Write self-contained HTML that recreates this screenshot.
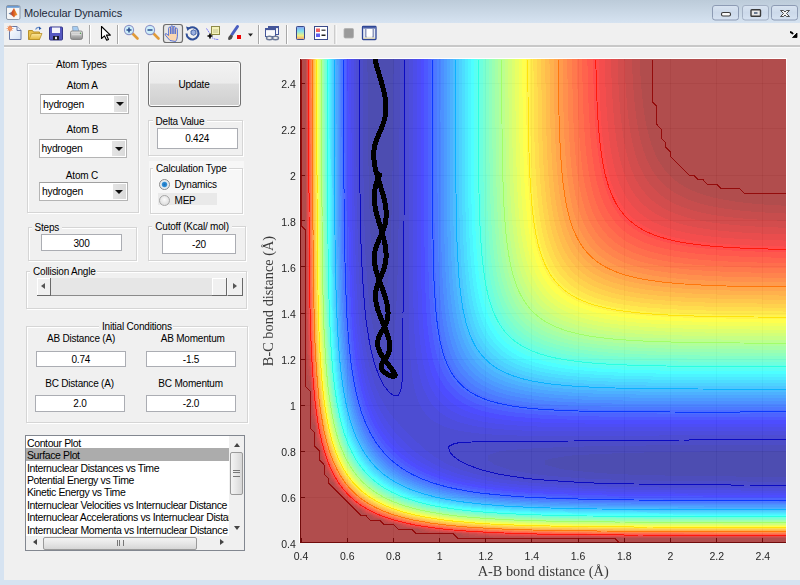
<!DOCTYPE html>
<html><head><meta charset="utf-8">
<style>
html,body{margin:0;padding:0;}
body{width:800px;height:585px;overflow:hidden;position:relative;background:#d6e3f1;font-family:"Liberation Sans",sans-serif;font-size:11px;color:#000;}
.abs{position:absolute;}
#title{left:0;top:0;width:800px;height:23px;background:linear-gradient(#bccbd9,#d6e3f1);}
#ttext{left:24px;top:7px;font-size:11px;line-height:12px;color:#1e2a3a;letter-spacing:-0.05px;}
#client{left:4px;top:23px;width:796px;height:557px;background:#f0f0f0;}
#toolbar{left:4px;top:23px;width:796px;height:22px;background:#f0f0f0;}
#tbline{left:4px;top:45px;width:796px;height:2px;background:#c8c8c8;border-bottom:1px solid #fafafa;}
.wbtn{top:5px;height:14px;border:1px solid #8b9ab0;border-radius:3px;background:linear-gradient(#d3dfed,#c7d5e6);box-shadow:inset 0 0 0 1px #e6eef7;}
.panel{position:absolute;border:1px solid #d0d0d0;box-shadow:1px 1px 0 #fff inset,1px 1px 0 #fff;}
.ptitle{position:absolute;background:#f0f0f0;padding:0 2px;white-space:nowrap;line-height:12px;}
.lbl{position:absolute;white-space:nowrap;line-height:12px;}
.edit{position:absolute;background:#fff;border:1px solid #a5acb5;box-sizing:border-box;text-align:center;line-height:15px;}
.popup{position:absolute;background:#fff;border:1px solid #a9a9a9;box-sizing:border-box;}
.popup .t{position:absolute;left:3px;top:3px;font-size:11px;}
.popup .b{position:absolute;right:0;top:0;bottom:0;width:14px;background:linear-gradient(#f2f2f2,#dcdcdc);}
.popup .b:after{content:"";position:absolute;left:3px;top:7px;border-left:4px solid transparent;border-right:4px solid transparent;border-top:4px solid #000;}
.tick{font-size:10.5px;color:#262626;position:absolute;white-space:nowrap;line-height:11px;}
.sep{position:absolute;top:26px;width:1px;height:18px;background:#a0a0a0;border-right:1px solid #fff;}
.li{position:absolute;left:2px;height:12.5px;line-height:12.5px;white-space:nowrap;}
</style></head><body>
<div id="title" class="abs"></div>
<svg class="abs" style="left:0;top:0" width="800" height="23" viewBox="0 0 800 23">
<defs><linearGradient id="gbtn" x1="0" y1="0" x2="0" y2="1"><stop offset="0" stop-color="#d9e4f1"/><stop offset="0.5" stop-color="#ccd9ea"/><stop offset="1" stop-color="#d7e3f2"/></linearGradient>
<linearGradient id="gml" x1="0" y1="0" x2="1" y2="0"><stop offset="0" stop-color="#3a8ad0"/><stop offset="0.45" stop-color="#d04a20"/><stop offset="1" stop-color="#f0a030"/></linearGradient></defs>
<rect x="6.5" y="5.5" width="13.5" height="14" rx="1.5" fill="#f6f6f6" stroke="#8a97a8"/>
<rect x="7" y="6" width="12.5" height="1.8" fill="#6a9ad0"/>
<path d="M8.5 13.5l3-1.5 2.5-4 3.5 7-2 0.5-1.5 2-2-2z" fill="url(#gml)"/>
<rect x="712.5" y="5.5" width="26" height="14.5" rx="2.5" fill="url(#gbtn)" stroke="#8d9bb4"/>
<rect x="721.5" y="12.5" width="9" height="3.5" rx="1.5" fill="#fafafa" stroke="#3a3a3a" stroke-width="1.1"/>
<rect x="742.5" y="5.5" width="26" height="14.5" rx="2.5" fill="url(#gbtn)" stroke="#a3b0c4"/>
<rect x="751" y="9.8" width="9.5" height="6.5" rx="0.8" fill="#e8e8e8" stroke="#3a3a3a" stroke-width="1.4"/>
<rect x="754" y="12" width="3.5" height="2" fill="#6a7a90"/>
<rect x="771.5" y="5.5" width="26" height="14.5" rx="2.5" fill="url(#gbtn)" stroke="#8d9bb4"/>
<path d="M780.5 10.5h3l1.5 1.5 1.5-1.5h3l-3 3 3 3h-3l-1.5-1.5-1.5 1.5h-3l3-3z" fill="#f4f4f4" stroke="#3a3a3a" stroke-width="0.9" stroke-linejoin="round"/>
</svg>
<div id="ttext" class="abs">Molecular Dynamics</div>
<div id="client" class="abs"></div>
<div id="tbline" class="abs"></div>
<svg class="abs" style="left:0;top:0" width="800" height="48" viewBox="0 0 800 48">
<defs>
<linearGradient id="gpage" x1="0" y1="0" x2="1" y2="1"><stop offset="0" stop-color="#ffffff"/><stop offset="1" stop-color="#d5e2f5"/></linearGradient>
<linearGradient id="gfold" x1="0" y1="0" x2="0" y2="1"><stop offset="0" stop-color="#fbe7a0"/><stop offset="1" stop-color="#e4b83c"/></linearGradient>
<linearGradient id="gcb" x1="0" y1="0" x2="0" y2="1"><stop offset="0" stop-color="#8aa0f0"/><stop offset="0.35" stop-color="#7fe0f0"/><stop offset="0.7" stop-color="#f0f080"/><stop offset="1" stop-color="#f4a070"/></linearGradient>
<linearGradient id="gprn" x1="0" y1="0" x2="0" y2="1"><stop offset="0" stop-color="#e8e8e8"/><stop offset="1" stop-color="#8a8a8a"/></linearGradient>
</defs>
<!-- new -->
<path d="M9.5 26.5h7.5l4 4v9h-11.5z" fill="url(#gpage)" stroke="#6678a8"/>
<path d="M17 26.5v4h4" fill="#e8eef8" stroke="#6678a8"/>
<circle cx="10" cy="28.5" r="2.2" fill="#f07a30"/>
<path d="M6.5 28.5h7M10 25v7M7.5 26l5 5M12.5 26l-5 5" stroke="#f39a70" stroke-width="0.8"/>
<!-- open -->
<path d="M28.5 30.5h4l1 1.5h6v7.5h-11z" fill="#e9c04a" stroke="#b8902a"/>
<path d="M29 39.5l2.5-6h10.5l-2.5 6z" fill="url(#gfold)" stroke="#b8902a" stroke-width="0.8"/>
<path d="M35.5 29.5q2-3 4.5-1.5" fill="none" stroke="#6a8ec8" stroke-width="1.2"/>
<path d="M39 26.5l2.5 2-2.5 1.5z" fill="#2c5aa8"/>
<!-- save -->
<rect x="49.5" y="27" width="13" height="13" rx="1" fill="#5558c0" stroke="#34378a"/>
<rect x="52" y="27.5" width="8" height="5.5" fill="#f4f4fa"/>
<rect x="53" y="36" width="6" height="4" fill="#1a1a2a"/><rect x="55" y="36.8" width="2" height="2.4" fill="#e8e8e8"/>
<!-- print -->
<path d="M72.5 26.5h5l1.5 5h-6z" fill="#a6ccf2" stroke="#8aa0b8" stroke-width="0.8"/>
<path d="M70.5 32.5q0-1.5 1.5-1.5h9q1.5 0 1.5 1.5v5q0 2-2 2h-8q-2 0-2-2z" fill="url(#gprn)" stroke="#7a7a7a" stroke-width="0.8"/>
<rect x="72" y="34" width="9" height="1.2" fill="#d8d8d8"/>
<circle cx="80.5" cy="33.2" r="0.7" fill="#4a9a4a"/>
<!-- sep -->
<rect x="89" y="25" width="1" height="19" fill="#a8a8a8"/><rect x="90" y="25" width="1" height="19" fill="#fff"/>
<!-- arrow -->
<path d="M101.5 26.5v12l3-2.6 2.2 4.4 1.8-0.9-2.1-4.3h4z" fill="#fff" stroke="#000" stroke-width="1.1" stroke-linejoin="round"/>
<rect x="117" y="25" width="1" height="19" fill="#a8a8a8"/><rect x="118" y="25" width="1" height="19" fill="#fff"/>
<!-- zoom in -->
<line x1="132.5" y1="33.5" x2="137.5" y2="38.5" stroke="#e09a38" stroke-width="2.6" stroke-linecap="round"/>
<circle cx="129" cy="30" r="4.6" fill="#cdeefa" stroke="#8c94c8" stroke-width="1.1"/>
<path d="M126.5 30h5M129 27.5v5" stroke="#2a4a8a" stroke-width="1.5"/>
<!-- zoom out -->
<line x1="153.5" y1="33.5" x2="158.5" y2="38.5" stroke="#e09a38" stroke-width="2.6" stroke-linecap="round"/>
<circle cx="150" cy="30" r="4.6" fill="#cdeefa" stroke="#8c94c8" stroke-width="1.1"/>
<path d="M147.5 30h5" stroke="#2a4a8a" stroke-width="1.5"/>
<!-- pan pressed -->
<rect x="163.5" y="24.5" width="19" height="18" rx="2.5" fill="#e6e6e6" stroke="#6e6e6e" stroke-width="1.2"/>
<g fill="#fbd6b0" stroke="#4468d8" stroke-width="0.9">
<path d="M170 40.5l-4.6-5.2q-1-1.4 0.6-1.8l2.6 2v-7q0-1.3 1.1-1.3t1.1 1.3v5.5v-7q0-1.3 1.1-1.3t1.1 1.3v7v-6.3q0-1.3 1.1-1.3t1.1 1.3v6.3v-4.6q0-1.3 1.1-1.3t1.1 1.3v6.8q0 3-1.8 5.3z"/>
</g>
<!-- rotate -->
<path d="M189 28.5a6 6 0 1 1-2.5 5" fill="none" stroke="#2f4f98" stroke-width="2"/>
<path d="M186 26.5l4.5 1.2-3 3.2z" fill="#2f4f98"/>
<path d="M191 31l2.5-1.2 2.5 1.2v3l-2.5 1.3-2.5-1.3z" fill="#9ab0e0" stroke="#2f4f98" stroke-width="0.8"/>
<!-- data cursor -->
<rect x="211.5" y="26.5" width="8" height="8" fill="#f4f2b8" stroke="#8e8a48"/>
<path d="M213 30h5M213 32h5" stroke="#b8b488" stroke-width="0.8"/>
<path d="M206.5 28.5l3 4.5M212 37.5q2 2 7 2" fill="none" stroke="#6a6af8" stroke-width="1" stroke-dasharray="1.6 0.8"/>
<path d="M207.5 36h5M210 33.5v5" stroke="#000" stroke-width="1.6"/>
<!-- brush -->
<path d="M237.5 26.5l-5.5 8" stroke="#4a5ec0" stroke-width="3" stroke-linecap="round"/>
<path d="M230.5 34.5l2.5 1.5q-0.5 3-3.5 4l-1.5-0.5q0-3 2.5-5z" fill="#4a4a4a"/>
<rect x="237" y="35" width="4" height="4" fill="#f00000"/>
<path d="M248 33.5h5l-2.5 3z" fill="#222"/>
<rect x="258" y="25" width="1" height="19" fill="#a8a8a8"/><rect x="259" y="25" width="1" height="19" fill="#fff"/>
<!-- link -->
<rect x="268.5" y="26.5" width="10" height="8" fill="#f4f6fa" stroke="#44569a"/><rect x="268.5" y="26.5" width="10" height="1.6" fill="#44569a"/>
<rect x="265.5" y="28.5" width="10" height="8" fill="#f8f9fc" stroke="#44569a"/><rect x="265.5" y="28.5" width="10" height="1.6" fill="#44569a"/>
<ellipse cx="269.5" cy="38" rx="3" ry="1.8" fill="none" stroke="#6a7898" stroke-width="1.4"/>
<ellipse cx="275.5" cy="38" rx="3" ry="1.8" fill="none" stroke="#6a7898" stroke-width="1.4"/>
<rect x="286" y="25" width="1" height="19" fill="#a8a8a8"/><rect x="287" y="25" width="1" height="19" fill="#fff"/>
<!-- colorbar -->
<rect x="296.5" y="26.5" width="8" height="13" rx="0.8" fill="url(#gcb)" stroke="#3a4a8a"/>
<!-- legend -->
<rect x="314.5" y="26.5" width="13" height="13" fill="#fff" stroke="#3a4a8a"/>
<rect x="316" y="28.5" width="4" height="3.5" fill="#f06060"/><rect x="316" y="33.5" width="4" height="3.5" fill="#6060f0"/>
<rect x="321.5" y="29.5" width="4" height="1.5" fill="#555"/><rect x="321.5" y="34.5" width="4" height="1.5" fill="#222"/>
<rect x="334.5" y="25" width="1" height="19" fill="#a8a8a8"/><rect x="335.5" y="25" width="1" height="19" fill="#fff"/>
<!-- hide plot tools -->
<rect x="344" y="28.5" width="9.5" height="9.5" rx="1.2" fill="#9a9a9a" stroke="#b0b0b0" stroke-width="0.8"/>
<!-- show plot tools -->
<rect x="362.5" y="26.5" width="13.5" height="13" rx="0.8" fill="#e6ebf5" stroke="#2e4696" stroke-width="1.3"/>
<rect x="363.2" y="27.2" width="12" height="1.3" fill="#2e4696"/>
<rect x="365.5" y="29" width="1" height="8.5" fill="#3a4a8a"/><rect x="372.5" y="29" width="1" height="8.5" fill="#3a4a8a"/>
<rect x="366.5" y="29" width="6" height="7.5" fill="#fff"/>
<rect x="363.5" y="37.6" width="11.5" height="1.1" fill="#e8dca8"/>
<!-- right arrow -->
<path d="M790 32q2 0 3 2.2" fill="none" stroke="#000" stroke-width="1.8"/>
<path d="M792.5 37.5h4.5v-4.5z" fill="#000" stroke="#000" stroke-width="0.8"/>
</svg>

<div class="abs" style="left:27px;top:63px;width:110px;height:148px;border:1px solid #d5d5d5;box-shadow:1px 1px 0 #fff, inset 1px 1px 0 #fff;"></div>
<div class="abs" style="left:53.0px;top:62px;width:57.0px;height:4px;background:#f0f0f0"></div>
<div class="lbl" style="left:56.0px;top:58.8px;font-size:10px;letter-spacing:-0.2px;color:#000;">Atom Types</div>
<div class="lbl" style="left:-17.8px;top:79.7px;width:200px;text-align:center;font-size:10px;letter-spacing:-0.2px;color:#000;">Atom A</div>
<div class="lbl" style="left:-17.6px;top:124.0px;width:200px;text-align:center;font-size:10px;letter-spacing:-0.2px;color:#000;">Atom B</div>
<div class="lbl" style="left:-18.1px;top:169.7px;width:200px;text-align:center;font-size:10px;letter-spacing:-0.2px;color:#000;">Atom C</div>
<div class="abs" style="left:40.0px;top:94.0px;width:88.5px;height:19.5px;background:#fff;border:1px solid #b4b4b4;border-top-color:#a0a0a0;box-sizing:border-box;"></div>
<div class="abs" style="left:113.5px;top:96.0px;width:13px;height:15.5px;background:linear-gradient(90deg,#e4e4e4,#dadada);"></div>
<div class="abs" style="left:116.0px;top:102.0px;width:0;height:0;border-left:4px solid transparent;border-right:4px solid transparent;border-top:4px solid #111;"></div>
<div class="lbl" style="left:43.0px;top:98.8px;font-size:10.3px;letter-spacing:-0.25px;color:#000;">hydrogen</div>
<div class="abs" style="left:38.5px;top:138.5px;width:88.5px;height:19.5px;background:#fff;border:1px solid #b4b4b4;border-top-color:#a0a0a0;box-sizing:border-box;"></div>
<div class="abs" style="left:112.0px;top:140.5px;width:13px;height:15.5px;background:linear-gradient(90deg,#e4e4e4,#dadada);"></div>
<div class="abs" style="left:114.5px;top:146.5px;width:0;height:0;border-left:4px solid transparent;border-right:4px solid transparent;border-top:4px solid #111;"></div>
<div class="lbl" style="left:41.5px;top:143.3px;font-size:10.3px;letter-spacing:-0.25px;color:#000;">hydrogen</div>
<div class="abs" style="left:39.0px;top:181.5px;width:88.5px;height:19.0px;background:#fff;border:1px solid #b4b4b4;border-top-color:#a0a0a0;box-sizing:border-box;"></div>
<div class="abs" style="left:112.5px;top:183.5px;width:13px;height:15.0px;background:linear-gradient(90deg,#e4e4e4,#dadada);"></div>
<div class="abs" style="left:115.0px;top:189.5px;width:0;height:0;border-left:4px solid transparent;border-right:4px solid transparent;border-top:4px solid #111;"></div>
<div class="lbl" style="left:42.0px;top:186.3px;font-size:10.3px;letter-spacing:-0.25px;color:#000;">hydrogen</div>
<div class="abs" style="left:148px;top:61px;width:93px;height:46px;box-sizing:border-box;border:1px solid #707070;border-radius:3px;background:linear-gradient(#f2f2f2 0%,#ebebeb 48%,#dddddd 50%,#cfcfcf 100%);box-shadow:inset 0 0 0 1px #fcfcfc;"></div>
<div class="lbl" style="left:94.0px;top:79.4px;width:200px;text-align:center;font-size:10px;letter-spacing:-0.2px;color:#000;">Update</div>
<div class="abs" style="left:148px;top:120px;width:93px;height:34px;border:1px solid #d5d5d5;box-shadow:1px 1px 0 #fff, inset 1px 1px 0 #fff;"></div>
<div class="abs" style="left:152.5px;top:119px;width:54.0px;height:4px;background:#f0f0f0"></div>
<div class="lbl" style="left:155.5px;top:116.3px;font-size:10px;letter-spacing:-0.2px;color:#000;">Delta Value</div>
<div class="abs" style="left:157.0px;top:128.0px;width:80.5px;height:21.0px;background:#fff;border:1px solid #abadb3;box-sizing:border-box;"></div>
<div class="lbl" style="left:97.2px;top:132.8px;width:200px;text-align:center;font-size:10px;letter-spacing:-0.2px;color:#000;">0.424</div>
<div class="abs" style="left:149px;top:161px;width:95px;height:54px;background:#f7f7f7"></div>
<div class="abs" style="left:150px;top:168px;width:91px;height:44px;border:1px solid #d5d5d5;box-shadow:1px 1px 0 #fff, inset 1px 1px 0 #fff;"></div>
<div class="abs" style="left:153.0px;top:167px;width:76.0px;height:4px;background:#f7f7f7"></div>
<div class="lbl" style="left:156.0px;top:163.3px;font-size:10px;letter-spacing:-0.2px;color:#000;">Calculation Type</div>
<div class="abs" style="left:158px;top:193px;width:59px;height:12px;background:#e9e9e9"></div>
<div class="abs" style="left:158.5px;top:178.5px;width:11px;height:11px;border-radius:50%;box-sizing:border-box;border:1px solid #8a8a8a;background:radial-gradient(circle at 50% 50%,#1e6fb5 0,#2f8fd8 2.2px,#dfe8ef 3.2px,#f4f4f4 5px);"></div>
<div class="abs" style="left:158.5px;top:194.5px;width:11px;height:11px;border-radius:50%;box-sizing:border-box;border:1px solid #a6a6a6;background:radial-gradient(circle at 50% 40%,#fafafa 0,#e0e0e0 5px);"></div>
<div class="lbl" style="left:174.5px;top:178.5px;font-size:10px;letter-spacing:-0.2px;color:#000;">Dynamics</div>
<div class="lbl" style="left:174.5px;top:194.5px;font-size:10px;letter-spacing:-0.2px;color:#000;">MEP</div>
<div class="abs" style="left:28px;top:227px;width:107px;height:32px;border:1px solid #d5d5d5;box-shadow:1px 1px 0 #fff, inset 1px 1px 0 #fff;"></div>
<div class="abs" style="left:31.5px;top:226px;width:30.0px;height:4px;background:#f0f0f0"></div>
<div class="lbl" style="left:34.5px;top:222.3px;font-size:10px;letter-spacing:-0.2px;color:#000;">Steps</div>
<div class="abs" style="left:41.0px;top:234.0px;width:81.0px;height:17.0px;background:#fff;border:1px solid #abadb3;box-sizing:border-box;"></div>
<div class="lbl" style="left:-18.5px;top:237.7px;width:200px;text-align:center;font-size:10px;letter-spacing:-0.2px;color:#000;">300</div>
<div class="abs" style="left:148px;top:226px;width:96px;height:33px;border:1px solid #d5d5d5;box-shadow:1px 1px 0 #fff, inset 1px 1px 0 #fff;"></div>
<div class="abs" style="left:152.3px;top:225px;width:80.0px;height:4px;background:#f0f0f0"></div>
<div class="lbl" style="left:155.3px;top:221.3px;font-size:10px;letter-spacing:-0.2px;color:#000;">Cutoff (Kcal/ mol)</div>
<div class="abs" style="left:162.0px;top:234.0px;width:74.0px;height:19.5px;background:#fff;border:1px solid #abadb3;box-sizing:border-box;"></div>
<div class="lbl" style="left:99.0px;top:238.7px;width:200px;text-align:center;font-size:10px;letter-spacing:-0.2px;color:#000;">-20</div>
<div class="abs" style="left:26px;top:271px;width:219px;height:36px;border:1px solid #d5d5d5;box-shadow:1px 1px 0 #fff, inset 1px 1px 0 #fff;"></div>
<div class="abs" style="left:30.0px;top:270px;width:67.0px;height:4px;background:#f0f0f0"></div>
<div class="lbl" style="left:33.0px;top:265.6px;font-size:10px;letter-spacing:-0.2px;color:#000;">Collision Angle</div>
<div class="abs" style="left:37px;top:278px;width:205px;height:17px;background:#e6e6e6;border-bottom:1px solid #8a8a8a;"></div>
<div class="abs" style="left:37px;top:278px;width:13px;height:17px;background:#f0f0f0;border-right:1px solid #696969;border-bottom:1px solid #696969;box-shadow:inset 1px 1px 0 #fff;"></div>
<div class="abs" style="left:41px;top:283px;width:0;height:0;border-top:3.5px solid transparent;border-bottom:3.5px solid transparent;border-right:4px solid #555;"></div>
<div class="abs" style="left:212px;top:278px;width:14px;height:17px;background:#f0f0f0;border-right:1px solid #696969;border-bottom:1px solid #696969;box-shadow:inset 1px 1px 0 #fff;"></div>
<div class="abs" style="left:227px;top:278px;width:14px;height:17px;background:#f0f0f0;border-right:1px solid #696969;border-bottom:1px solid #696969;border-left:1px solid #f8f8f8;"></div>
<div class="abs" style="left:233px;top:283px;width:0;height:0;border-top:3.5px solid transparent;border-bottom:3.5px solid transparent;border-left:4px solid #555;"></div>
<div class="abs" style="left:26px;top:326px;width:220px;height:95px;border:1px solid #d5d5d5;box-shadow:1px 1px 0 #fff, inset 1px 1px 0 #fff;"></div>
<div class="abs" style="left:99.0px;top:325px;width:74.0px;height:4px;background:#f0f0f0"></div>
<div class="lbl" style="left:102.0px;top:320.6px;font-size:10px;letter-spacing:-0.2px;color:#000;">Initial Conditions</div>
<div class="lbl" style="left:-19.0px;top:333.1px;width:200px;text-align:center;font-size:10px;letter-spacing:-0.2px;color:#000;">AB Distance (A)</div>
<div class="lbl" style="left:-20.5px;top:377.9px;width:200px;text-align:center;font-size:10px;letter-spacing:-0.2px;color:#000;">BC Distance (A)</div>
<div class="lbl" style="left:92.7px;top:333.1px;width:200px;text-align:center;font-size:10px;letter-spacing:-0.2px;color:#000;">AB Momentum</div>
<div class="lbl" style="left:90.6px;top:377.7px;width:200px;text-align:center;font-size:10px;letter-spacing:-0.2px;color:#000;">BC Momentum</div>
<div class="abs" style="left:36.0px;top:350.5px;width:89.5px;height:16.5px;background:#fff;border:1px solid #abadb3;box-sizing:border-box;"></div>
<div class="lbl" style="left:-19.2px;top:353.7px;width:200px;text-align:center;font-size:10px;letter-spacing:-0.2px;color:#000;">0.74</div>
<div class="abs" style="left:35.0px;top:394.5px;width:90.0px;height:17.0px;background:#fff;border:1px solid #abadb3;box-sizing:border-box;"></div>
<div class="lbl" style="left:-20.0px;top:397.9px;width:200px;text-align:center;font-size:10px;letter-spacing:-0.2px;color:#000;">2.0</div>
<div class="abs" style="left:146.0px;top:350.5px;width:90.0px;height:16.5px;background:#fff;border:1px solid #abadb3;box-sizing:border-box;"></div>
<div class="lbl" style="left:91.0px;top:353.7px;width:200px;text-align:center;font-size:10px;letter-spacing:-0.2px;color:#000;">-1.5</div>
<div class="abs" style="left:146.0px;top:394.5px;width:90.0px;height:17.0px;background:#fff;border:1px solid #abadb3;box-sizing:border-box;"></div>
<div class="lbl" style="left:91.0px;top:397.9px;width:200px;text-align:center;font-size:10px;letter-spacing:-0.2px;color:#000;">-2.0</div>
<div class="abs" style="left:25px;top:435px;width:220px;height:116px;box-sizing:border-box;border:1px solid #828790;background:#fff;overflow:hidden;">
<div class="abs" style="left:0px;top:12.3px;width:203px;height:12.7px;background:#acacac;"></div>
<div class="abs" style="left:0;top:0;width:203px;height:100px;overflow:hidden;">
<div class="lbl" style="left:1px;top:0.6px;font-size:10.5px;letter-spacing:-0.38px;">Contour Plot</div>
<div class="lbl" style="left:1px;top:13.0px;font-size:10.5px;letter-spacing:-0.38px;">Surface Plot</div>
<div class="lbl" style="left:1px;top:25.5px;font-size:10.5px;letter-spacing:-0.38px;">Internuclear Distances vs Time</div>
<div class="lbl" style="left:1px;top:38.0px;font-size:10.5px;letter-spacing:-0.38px;">Potential Energy vs Time</div>
<div class="lbl" style="left:1px;top:50.4px;font-size:10.5px;letter-spacing:-0.38px;">Kinetic Energy vs Time</div>
<div class="lbl" style="left:1px;top:62.9px;font-size:10.5px;letter-spacing:-0.38px;">Internuclear Velocities vs Internuclear Distance</div>
<div class="lbl" style="left:1px;top:75.4px;font-size:10.5px;letter-spacing:-0.38px;">Internuclear Accelerations vs Internuclear Distance</div>
<div class="lbl" style="left:1px;top:87.9px;font-size:10.5px;letter-spacing:-0.38px;">Internuclear Momenta vs Internuclear Distance</div>
</div>
<div class="abs" style="left:203px;top:0;width:15px;height:100px;background:#f0f0f0;"></div>
<div class="abs" style="left:208px;top:7px;width:0;height:0;border-left:3.5px solid transparent;border-right:3.5px solid transparent;border-bottom:4px solid #444;"></div>
<div class="abs" style="left:208px;top:90px;width:0;height:0;border-left:3.5px solid transparent;border-right:3.5px solid transparent;border-top:4px solid #444;"></div>
<div class="abs" style="left:204px;top:16px;width:13px;height:43px;box-sizing:border-box;border:1px solid #9a9a9a;border-radius:2px;background:linear-gradient(90deg,#f4f4f4,#e6e6e6 50%,#d6d6d6);"></div>
<div class="abs" style="left:207px;top:34px;width:7px;height:5px;border-top:1px solid #777;border-bottom:1px solid #777;"></div><div class="abs" style="left:207px;top:36px;width:7px;height:1px;background:#777;"></div>
<div class="abs" style="left:0;top:100px;width:218px;height:15px;background:#f0f0f0;"></div>
<div class="abs" style="left:7px;top:103px;width:0;height:0;border-top:3.5px solid transparent;border-bottom:3.5px solid transparent;border-right:4px solid #444;"></div>
<div class="abs" style="left:194px;top:103px;width:0;height:0;border-top:3.5px solid transparent;border-bottom:3.5px solid transparent;border-left:4px solid #444;"></div>
<div class="abs" style="left:17px;top:101px;width:154px;height:13px;box-sizing:border-box;border:1px solid #9a9a9a;border-radius:2px;background:linear-gradient(#f4f4f4,#e6e6e6 50%,#d6d6d6);"></div>
<div class="abs" style="left:91px;top:104px;width:5px;height:6px;border-left:1px solid #777;border-right:1px solid #777;"></div><div class="abs" style="left:93px;top:104px;width:1px;height:6px;background:#777;"></div>
</div>

<svg class="abs" style="left:0;top:0" width="800" height="585" viewBox="0 0 800 585"><defs><clipPath id="pc0"><rect x="300" y="59" width="486" height="484"/></clipPath></defs><g clip-path="url(#pc0)" shape-rendering="crispEdges"><rect x="300" y="59" width="486" height="484" fill="rgb(166,77,77)"/>
<path d="M601 488 615 488 629 488 643 489 657 489 671 489 684 489 698 489 712 489 726 489 740 489 754 489 768 489 781 489 786 483 786 469 786 456 786 442 781 433 768 433 754 433 740 433 726 433 712 433 698 433 684 433 671 433 657 433 643 433 629 433 615 434 601 434 587 434 574 434 560 434 546 433 532 433 518 433 509 432 495 432 481 430 467 428 458 426 449 423 440 418 430 410 426 403 421 394 417 382 416 373 414 359 413 345 412 332 411 322 411 308 411 295 411 281 411 267 411 253 411 239 411 226 411 212 411 198 411 184 411 170 411 157 411 143 411 129 411 115 411 101 411 88 411 74 412 60 398 60 384 60 370 60 356 60 355 69 355 83 355 97 355 111 355 124 355 138 355 152 355 166 355 180 356 193 356 207 356 221 356 235 356 246 357 258 357 272 358 285 359 299 360 313 361 327 362 336 364 350 366 359 369 373 371 382 375 393 380 403 384 411 389 419 396 428 403 435 409 442 416 448 426 455 433 460 442 465 452 469 463 473 472 475 486 479 495 480 509 482 518 483 532 484 546 485 560 486 574 487 587 487 600 488Z" fill="rgb(76,76,199)"/>
<path d="M592 497 606 497 620 498 634 498 647 498 661 498 675 498 689 498 703 498 717 498 731 498 744 498 758 498 772 498 786 498 786 489 772 489 758 489 744 489 731 489 717 489 703 489 689 489 675 489 661 489 647 489 634 488 620 488 606 488 597 488 583 487 569 487 555 486 541 485 527 484 518 483 504 481 490 479 481 478 467 474 458 471 449 468 440 464 430 458 421 452 414 446 407 440 400 433 393 425 389 419 383 410 378 400 374 391 370 379 368 368 366 359 363 345 362 331 361 322 360 308 359 295 358 281 357 267 357 253 356 244 356 230 356 216 356 203 355 189 355 175 355 161 355 147 355 134 355 120 355 106 355 92 355 78 355 65 347 60 346 69 346 83 346 97 346 111 346 124 346 138 346 152 346 166 346 180 346 193 346 207 347 221 347 235 347 249 347 258 348 272 348 285 349 299 349 313 350 327 351 341 352 350 354 364 356 377 358 387 361 399 364 410 368 419 372 428 378 437 384 446 389 451 398 460 404 465 412 470 421 474 431 479 444 483 453 485 466 488 477 489 490 491 500 492 513 494 527 494 541 495 555 496 569 496 583 497 592 497ZM513 433 527 433 541 433 555 434 569 434 583 434 597 434 610 434 624 433 638 433 652 433 666 433 680 433 694 433 707 433 721 433 735 433 749 433 763 433 777 433 786 433 786 419 777 417 763 417 749 417 735 417 721 417 707 417 694 417 680 417 666 417 652 417 638 417 624 417 610 417 597 416 583 416 569 416 555 415 541 415 532 414 518 413 504 411 495 409 481 405 472 402 463 396 456 391 449 383 444 375 440 364 437 354 434 345 432 331 431 318 430 308 429 295 429 281 428 267 428 253 428 239 428 226 428 212 428 198 428 184 428 170 428 157 428 143 428 129 428 115 428 101 428 88 428 74 428 60 416 60 411 65 411 78 411 92 411 106 411 120 411 134 411 147 411 161 411 175 411 189 411 203 411 216 411 230 411 244 411 258 411 272 411 285 411 299 411 313 412 327 412 336 413 350 414 364 416 377 419 387 422 396 427 405 435 414 441 419 451 423 463 427 472 429 486 431 500 432 513 433Z" fill="rgb(76,76,243)"/>
<path d="M527 502 541 502 555 503 569 503 583 503 597 504 610 504 624 504 638 504 652 504 666 504 680 504 694 505 707 505 721 505 735 505 749 505 763 505 777 505 786 502 777 498 763 498 749 498 735 498 721 498 707 498 694 498 680 498 666 498 652 498 638 498 624 498 610 497 597 497 587 497 574 497 560 496 546 495 532 495 518 494 504 493 495 492 481 490 467 488 458 486 446 483 435 480 426 476 416 472 407 467 398 460 393 456 384 446 380 440 375 433 370 423 366 413 362 400 359 391 356 379 355 368 353 354 352 345 351 331 350 318 349 304 348 290 348 276 347 262 347 253 347 239 347 226 347 212 346 198 346 184 346 170 346 157 346 143 346 129 346 115 346 101 346 88 346 74 346 60 339 65 339 78 339 92 339 106 339 120 340 134 340 147 340 161 340 175 340 189 340 203 340 216 340 230 340 244 341 258 341 272 341 285 342 299 342 313 343 322 344 336 345 350 346 364 347 373 349 387 352 399 355 410 357 419 361 429 366 439 370 447 377 456 384 463 391 469 398 474 407 479 416 484 428 488 440 491 449 493 463 496 472 497 486 499 500 500 513 501 526 502ZM537 414 550 415 564 416 578 416 592 416 606 417 620 417 634 417 647 417 661 417 675 417 689 417 703 417 717 417 731 417 744 417 758 417 772 417 786 417 786 405 777 403 763 403 749 403 735 403 721 403 707 403 694 403 680 402 666 402 652 402 638 402 624 402 610 402 597 402 583 401 569 401 560 400 546 399 532 397 522 396 509 393 500 390 490 387 481 382 472 375 466 368 460 359 456 350 453 341 449 327 448 318 446 304 445 290 444 278 444 267 443 253 443 239 443 226 442 212 442 198 442 184 442 170 442 157 442 143 442 129 442 115 442 101 442 88 442 74 442 60 430 60 428 69 428 83 428 97 428 111 428 124 428 138 428 152 428 166 428 180 428 193 428 207 428 221 428 235 428 249 428 262 429 276 429 290 430 304 430 313 432 327 434 341 435 350 439 364 443 373 448 382 453 388 462 396 470 400 480 405 490 408 500 410 513 412 527 414 537 414Z" fill="rgb(76,121,255)"/>
<path d="M509 506 523 507 537 508 550 508 564 508 578 509 592 509 606 509 620 509 634 509 647 510 661 510 675 510 689 510 703 510 717 510 731 510 744 510 758 510 772 510 786 510 781 505 768 505 754 505 740 505 726 505 712 505 698 505 684 505 671 504 657 504 643 504 629 504 615 504 601 504 587 504 574 503 560 503 546 502 532 502 523 501 509 501 495 499 481 498 472 497 458 495 446 492 435 490 426 487 416 483 406 479 398 474 389 467 381 460 375 453 370 446 365 437 361 428 356 416 353 405 351 396 349 382 347 373 346 359 344 345 343 331 343 319 342 308 342 295 341 281 341 267 341 253 340 239 340 226 340 212 340 198 340 184 340 170 340 157 340 143 340 129 339 115 339 101 339 88 339 74 339 60 334 65 334 78 334 92 334 106 334 120 334 134 334 147 334 161 334 175 335 189 335 203 335 216 335 230 335 244 335 258 336 272 336 285 336 299 337 313 337 327 338 337 339 350 340 364 342 377 343 387 345 400 347 410 351 423 354 433 358 442 363 451 370 460 375 466 383 474 390 479 398 484 407 488 419 492 430 496 440 498 453 501 463 502 477 504 490 505 504 506ZM569 401 583 401 597 402 610 402 624 402 638 402 652 402 666 402 680 402 694 403 707 403 721 403 735 403 749 403 763 403 777 403 786 400 786 389 772 389 758 389 744 389 731 389 717 389 703 389 689 389 675 389 661 389 647 389 634 388 620 388 606 388 592 387 582 387 569 386 555 384 541 383 532 381 518 377 509 374 500 370 490 364 485 359 478 350 473 341 469 331 466 322 463 308 461 299 460 285 459 272 458 262 457 249 457 235 456 221 456 207 456 193 456 180 456 166 456 152 456 138 456 124 456 111 456 97 456 83 456 69 453 60 442 60 442 74 442 88 442 101 442 115 442 129 442 143 442 157 442 170 442 184 442 198 442 212 443 226 443 239 443 253 444 267 444 278 445 290 446 304 448 318 449 327 453 341 456 350 460 359 466 368 472 375 481 382 490 387 500 390 509 393 522 396 532 397 546 399 560 400 569 401Z" fill="rgb(76,166,255)"/>
<path d="M509 511 523 512 537 512 550 513 564 513 578 513 592 513 606 514 620 514 634 514 647 514 661 514 675 514 689 514 703 514 717 514 731 514 744 514 758 514 772 514 786 514 781 510 768 510 754 510 740 510 726 510 712 510 698 510 684 510 671 510 657 510 643 509 629 509 615 509 601 509 587 509 574 509 560 508 546 508 532 507 518 507 508 506 495 505 481 504 467 503 458 501 444 499 435 497 421 493 412 490 403 486 393 481 384 475 378 469 370 461 366 455 361 446 356 437 352 426 348 414 346 405 344 391 342 382 341 368 339 354 338 341 338 331 337 318 336 304 336 290 336 276 335 262 335 249 335 235 335 221 335 207 335 193 335 180 334 166 334 152 334 138 334 124 334 111 334 97 334 83 334 69 333 60 330 69 330 83 330 97 330 111 330 124 330 138 330 152 330 166 330 180 330 193 330 207 330 221 331 235 331 249 331 262 331 276 331 290 332 304 332 318 333 331 333 341 334 354 336 368 337 382 338 391 341 405 343 414 346 428 349 437 353 446 358 456 364 465 370 472 378 479 384 483 393 489 403 493 413 497 426 501 435 503 449 505 458 507 472 508 486 509 500 510 509 511ZM583 387 597 387 610 388 624 388 638 388 652 389 666 389 680 389 694 389 707 389 721 389 735 389 749 389 763 389 777 389 786 387 786 376 772 376 758 376 744 376 731 376 717 376 703 375 689 375 675 375 661 375 647 375 634 375 620 374 606 374 592 373 583 372 569 371 555 369 546 367 532 364 523 360 513 356 505 350 500 345 492 336 487 327 483 318 480 308 477 295 475 285 473 272 472 258 472 249 471 235 470 221 470 207 470 193 470 180 469 166 469 152 469 138 469 124 469 111 469 97 469 83 469 69 467 60 456 60 456 74 456 88 456 101 456 115 456 129 456 143 456 157 456 170 456 184 456 198 456 212 457 226 457 239 458 253 458 263 459 276 460 290 462 304 464 313 467 327 471 336 475 345 481 354 486 359 495 367 504 372 513 376 523 379 537 382 546 383 560 385 574 386 583 387Z" fill="rgb(76,221,255)"/>
<path d="M518 515 532 516 546 516 560 517 574 517 587 517 601 517 615 517 629 518 643 518 657 518 671 518 684 518 698 518 712 518 726 518 740 518 754 518 768 518 781 518 786 514 772 514 758 514 744 514 731 514 717 514 703 514 689 514 675 514 661 514 647 514 634 514 620 514 606 514 592 513 578 513 564 513 550 513 537 512 523 512 509 511 500 510 486 509 472 508 458 507 449 505 435 503 426 501 413 497 403 493 393 489 384 483 378 479 370 472 364 465 358 456 353 446 349 437 346 428 343 414 341 405 338 391 337 382 336 368 334 354 333 341 333 331 332 318 332 304 331 290 331 276 331 262 331 249 331 235 330 221 330 207 330 193 330 180 330 166 330 152 330 138 330 124 330 111 330 97 330 83 330 69 329 60 326 69 326 83 326 97 326 111 326 124 326 138 326 152 326 166 326 180 326 193 326 207 327 221 327 235 327 249 327 262 327 276 327 290 328 304 328 318 329 329 329 341 330 354 331 368 333 382 334 391 336 405 338 416 341 428 344 437 347 446 352 456 357 465 364 474 370 480 380 487 388 492 398 497 407 500 416 503 429 506 440 508 453 510 463 512 477 513 490 514 504 515 516 515ZM597 373 610 374 624 374 638 375 652 375 666 375 680 375 694 375 707 375 721 376 735 376 749 376 763 376 777 376 786 373 786 362 772 362 758 362 744 362 731 362 717 362 703 362 689 362 675 361 661 361 647 361 634 360 620 360 606 359 597 358 583 357 569 355 560 353 547 350 537 346 527 342 519 336 513 331 506 322 501 313 497 304 494 295 491 281 489 272 487 258 486 244 485 235 485 221 484 207 484 193 483 180 483 166 483 152 483 138 483 124 483 111 483 97 483 83 483 69 481 60 469 60 469 74 469 88 469 101 469 115 469 129 469 143 469 157 469 170 470 184 470 198 470 212 471 226 471 239 472 253 473 262 474 276 476 290 478 299 481 313 485 322 489 331 495 340 500 345 509 353 518 358 527 362 537 365 550 368 560 370 574 371 587 372 597 373Z" fill="rgb(87,255,243)"/>
<path d="M550 520 564 520 578 521 592 521 606 521 620 521 634 521 647 521 661 521 675 521 689 521 703 521 717 521 731 521 744 521 758 521 772 521 786 521 781 518 768 518 754 518 740 518 726 518 712 518 698 518 684 518 671 518 657 518 643 518 629 518 615 517 601 517 587 517 574 517 560 517 546 516 532 516 518 515 509 515 495 514 481 513 467 512 456 511 444 509 430 507 421 504 411 502 398 497 389 493 381 488 374 483 366 475 361 469 354 460 349 451 345 442 342 433 339 419 337 410 334 396 333 387 332 373 331 359 330 345 329 331 328 322 328 308 328 295 327 281 327 267 327 253 327 239 327 226 326 212 326 198 326 184 326 170 326 157 326 143 326 129 326 115 326 101 326 88 326 74 326 60 323 65 323 78 323 92 323 106 323 120 323 134 323 147 323 161 323 175 323 189 323 203 323 216 323 230 323 244 323 258 324 272 324 285 324 297 324 308 325 322 325 336 326 350 327 364 328 377 329 387 331 400 333 414 335 423 338 434 342 446 346 456 351 465 356 473 362 479 370 487 378 492 387 497 397 502 407 505 416 508 430 511 440 512 453 514 463 515 477 517 490 518 504 518 518 519 532 520 546 520ZM606 359 620 360 634 360 647 361 661 361 675 361 689 362 703 362 717 362 731 362 744 362 758 362 772 362 786 362 786 350 777 348 763 348 749 348 735 348 721 348 707 348 694 347 680 347 666 347 652 346 638 346 626 345 615 344 601 343 587 341 578 340 564 336 555 333 546 329 537 324 529 318 523 311 518 304 513 295 509 282 506 272 504 262 502 249 501 235 500 221 499 212 499 198 498 184 498 170 497 157 497 143 497 129 497 115 497 101 497 88 497 74 497 60 486 60 483 69 483 83 483 97 483 111 483 124 483 138 483 152 483 166 483 180 484 193 484 207 485 221 485 235 486 244 487 258 489 272 491 281 494 295 497 304 501 313 506 322 513 331 519 336 527 342 537 346 547 350 560 353 569 355 583 357 597 358 606 359Z" fill="rgb(143,255,187)"/>
<path d="M477 520 490 521 504 522 518 522 532 523 546 523 560 523 574 524 587 524 601 524 615 524 629 524 643 524 657 524 671 524 684 524 698 524 712 524 726 525 740 525 754 525 768 525 781 525 781 521 768 521 754 521 740 521 726 521 712 521 698 521 684 521 671 521 657 521 643 521 629 521 615 521 601 521 587 521 574 520 560 520 548 520 537 520 523 519 509 519 495 518 481 517 467 516 458 515 444 513 430 511 421 509 411 506 398 502 389 498 380 493 372 488 366 483 358 474 352 466 347 458 343 448 339 437 336 428 333 414 332 405 330 391 329 382 327 368 326 354 326 341 325 327 325 313 324 299 324 290 324 276 323 262 323 249 323 235 323 221 323 207 323 193 323 180 323 166 323 152 323 138 323 124 323 111 323 97 323 83 323 69 320 60 320 74 320 88 320 101 320 115 320 129 320 143 320 157 320 170 320 184 320 198 320 212 320 226 320 239 320 253 320 267 321 281 321 295 321 308 322 322 322 336 323 350 324 364 324 373 326 387 327 400 329 410 331 423 333 433 338 446 341 456 346 465 352 474 356 480 364 488 370 493 380 498 389 503 398 506 412 511 421 513 435 515 444 517 458 518 472 520ZM629 345 643 346 657 347 671 347 684 347 698 347 712 348 726 348 740 348 754 348 768 348 781 348 786 341 781 333 768 333 754 333 740 333 726 333 712 333 698 332 684 332 671 332 661 331 647 331 634 330 620 329 606 327 597 325 583 322 574 320 564 316 555 311 546 304 541 299 534 290 529 281 525 272 523 262 520 249 518 239 516 226 515 212 514 198 514 184 513 175 513 161 512 147 512 134 512 120 512 106 512 92 512 78 512 65 504 60 497 65 497 78 497 92 497 106 497 120 497 134 497 147 498 161 498 175 498 189 499 203 499 216 500 226 501 239 503 253 504 262 507 276 510 285 513 295 518 304 525 313 532 320 541 327 550 331 560 335 569 338 583 341 592 342 606 344 620 345 629 345Z" fill="rgb(187,255,143)"/>
<path d="M504 525 518 525 532 526 546 526 560 526 574 526 587 527 601 527 615 527 629 527 643 527 657 527 671 527 684 527 698 527 712 527 726 527 740 527 754 527 768 527 781 527 786 525 772 525 758 525 744 525 731 525 717 524 703 524 689 524 675 524 661 524 647 524 634 524 620 524 606 524 592 524 578 524 564 523 550 523 537 523 523 522 509 522 495 521 481 520 472 520 458 518 444 517 435 515 421 513 412 511 398 506 389 503 380 498 370 493 364 488 356 480 352 474 346 465 341 456 338 446 333 433 331 423 329 410 327 400 326 387 324 373 324 364 323 350 322 336 322 322 321 308 321 295 321 281 320 267 320 253 320 239 320 226 320 212 320 198 320 184 320 170 320 157 320 143 320 129 320 115 320 101 320 88 320 74 320 60 317 65 317 78 317 92 317 106 317 120 317 134 317 147 317 161 317 175 317 189 317 203 317 216 317 230 317 244 317 258 318 272 318 285 318 299 318 313 319 327 319 341 320 350 321 364 322 377 323 391 324 401 326 414 329 428 331 437 334 446 338 458 343 467 347 475 354 483 361 490 369 497 377 502 387 506 398 510 407 513 417 515 430 518 444 520 453 521 467 522 481 523 495 524 504 525ZM666 332 680 332 694 332 707 333 721 333 735 333 749 333 763 333 777 333 786 331 786 318 777 317 763 317 749 317 735 317 721 317 707 316 694 316 680 315 666 315 652 314 640 313 629 312 615 310 606 308 592 304 583 301 574 296 564 290 559 285 552 276 546 267 542 258 539 249 537 237 534 226 533 212 532 203 531 189 530 175 529 161 529 147 529 134 528 120 528 106 528 92 528 78 528 65 523 60 512 60 512 74 512 88 512 101 512 115 512 129 512 143 513 157 513 170 513 183 514 193 515 207 516 221 517 235 519 244 521 258 524 267 527 277 532 287 537 295 545 304 551 308 560 314 569 318 582 322 592 324 605 327 615 328 629 329 643 330 657 331 666 332Z" fill="rgb(243,255,87)"/>
<path d="M583 529 597 529 610 529 624 530 638 530 652 530 666 530 680 530 694 530 707 530 721 530 735 530 749 530 763 530 777 530 786 529 777 527 763 527 749 527 735 527 721 527 707 527 694 527 680 527 666 527 652 527 638 527 624 527 610 527 597 527 583 527 569 526 555 526 541 526 527 525 513 525 502 525 490 524 477 523 463 522 449 521 440 519 426 517 416 515 403 512 393 509 384 505 375 500 366 494 358 488 352 481 347 474 341 465 337 456 333 445 330 433 328 423 325 410 324 400 323 387 321 373 320 359 320 345 319 336 319 322 318 308 318 295 318 281 318 267 317 253 317 239 317 226 317 212 317 198 317 184 317 170 317 157 317 143 317 129 317 115 317 101 317 88 317 74 317 60 314 65 314 78 314 92 314 106 314 120 314 134 314 147 314 161 314 175 314 189 314 203 314 216 315 230 315 244 315 258 315 267 315 281 315 295 316 308 316 322 317 336 317 350 318 364 319 377 320 387 321 400 323 414 325 423 328 437 330 446 333 456 338 466 343 475 349 483 356 492 363 497 370 502 380 507 389 511 403 515 412 518 424 520 435 522 449 523 459 525 472 526 486 526 500 527 513 528 527 528 541 529 555 529 569 529 579 529ZM643 313 657 314 671 315 684 316 698 316 712 316 726 317 740 317 754 317 768 317 781 317 786 308 781 300 768 300 754 299 740 299 731 299 717 299 703 298 689 298 675 297 661 296 649 295 638 293 624 291 615 288 606 285 595 281 587 276 578 269 572 262 566 253 561 244 558 235 555 224 553 212 551 198 550 189 548 175 548 161 547 147 546 134 546 120 546 106 546 97 546 83 545 69 541 60 528 60 528 74 528 88 528 101 528 115 528 129 529 143 529 157 530 170 530 184 531 198 532 207 534 221 536 235 538 244 541 255 546 266 550 274 555 281 564 290 571 295 579 299 591 304 601 307 610 309 624 311 638 313Z" fill="rgb(255,221,76)"/>
<path d="M490 529 504 530 518 530 532 531 546 531 560 531 574 532 587 532 601 532 615 532 629 532 643 532 657 532 671 532 684 532 698 532 712 532 726 532 740 532 754 532 768 532 781 532 781 530 768 530 754 530 740 530 726 530 712 530 698 530 684 530 671 530 657 530 643 530 629 530 615 530 601 529 587 529 578 529 564 529 550 529 537 528 523 528 509 528 495 527 481 526 467 525 458 524 444 523 430 521 421 519 407 516 398 514 389 511 378 506 370 502 361 496 353 488 347 481 342 474 337 465 333 456 329 442 327 433 324 421 322 410 321 396 319 385 318 373 318 359 317 345 316 331 316 318 316 304 315 290 315 276 315 266 315 253 315 239 315 226 314 212 314 198 314 184 314 170 314 157 314 143 314 129 314 115 314 101 314 88 314 74 314 60 312 69 312 83 312 97 312 111 312 124 312 138 312 152 312 166 312 180 312 193 312 207 312 221 312 235 312 249 312 262 313 276 313 290 313 304 313 318 314 331 314 345 315 357 316 368 317 382 318 396 319 410 321 419 323 433 326 442 329 452 333 464 338 474 343 481 348 488 356 496 363 502 371 506 380 511 392 515 403 518 412 521 426 523 435 525 449 526 463 527 477 529 488 529ZM740 299 754 299 768 300 781 300 786 295 786 281 777 280 763 280 749 280 735 279 721 279 707 278 694 277 680 276 671 275 657 274 646 272 634 269 624 266 615 262 606 256 597 249 592 244 586 235 581 226 578 216 574 203 572 193 570 180 569 168 568 157 567 143 566 129 566 115 566 101 565 88 565 74 565 60 555 60 545 60 545 74 546 88 546 101 546 111 546 124 547 138 547 152 548 166 549 180 550 193 551 203 553 216 555 226 560 239 563 249 569 258 574 264 581 272 587 277 597 282 606 286 620 290 629 292 643 294 652 295 666 296 680 297 694 298 707 298 721 299 735 299Z" fill="rgb(255,166,76)"/>
<path d="M569 534 583 534 597 534 610 534 624 534 638 534 652 534 666 534 680 534 694 534 707 535 721 535 735 535 749 535 763 535 777 535 786 534 777 532 763 532 749 532 735 532 721 532 707 532 694 532 680 532 666 532 652 532 638 532 624 532 610 532 597 532 583 532 569 531 555 531 541 531 527 531 513 530 500 530 488 529 477 529 463 527 449 526 435 525 426 523 412 521 403 518 392 515 380 511 371 506 363 502 356 496 348 488 343 481 338 474 333 464 329 452 326 442 323 433 321 419 319 410 318 396 317 382 316 368 315 357 314 345 314 331 313 318 313 304 313 290 313 276 312 262 312 249 312 235 312 221 312 207 312 193 312 180 312 166 312 152 312 138 312 124 312 111 312 97 312 83 312 69 310 60 309 69 309 83 309 97 309 111 310 124 310 138 310 152 310 166 310 180 310 193 310 207 310 221 310 235 310 249 310 262 310 276 310 285 311 299 311 313 311 327 312 341 312 354 313 368 314 382 315 392 316 405 318 419 320 428 323 442 325 451 329 461 333 472 338 480 344 488 352 497 358 502 366 507 375 512 384 516 397 520 407 522 418 525 430 527 444 528 453 529 467 530 481 531 495 532 509 532 523 533 537 533 550 534 564 534ZM680 276 694 277 707 278 721 279 735 279 749 280 763 280 777 280 786 276 786 262 781 258 768 257 754 257 740 257 726 256 712 255 698 254 689 253 675 251 664 249 652 245 643 242 634 237 624 231 618 226 611 216 606 208 602 198 599 189 596 180 594 166 592 153 591 143 590 129 589 115 588 101 588 88 588 74 587 60 578 60 565 60 565 74 565 88 566 101 566 115 566 129 567 143 568 157 569 168 570 180 572 193 574 203 578 216 581 226 586 235 592 244 597 249 606 256 615 262 624 266 634 269 646 272 657 274 671 275 680 276Z" fill="rgb(255,121,76)"/>
<path d="M490 534 504 535 518 535 532 536 546 536 560 536 574 536 587 536 601 536 615 536 629 536 643 536 657 536 671 537 684 537 698 537 712 537 726 537 740 537 754 537 768 537 781 537 781 535 768 535 754 535 740 535 726 535 712 535 698 534 684 534 671 534 657 534 643 534 629 534 615 534 601 534 587 534 574 534 564 534 550 534 537 533 523 533 509 532 495 532 481 531 467 530 453 529 444 528 430 527 418 525 407 522 397 520 384 516 375 512 366 507 358 502 352 497 344 488 338 480 333 472 329 461 325 451 323 442 320 428 318 419 316 405 315 392 314 382 313 368 312 354 312 341 311 327 311 313 311 299 310 285 310 276 310 262 310 249 310 235 310 221 310 207 310 193 310 180 310 166 310 152 310 138 310 124 309 111 309 97 309 83 309 69 307 60 307 74 307 88 307 101 307 115 307 129 307 143 307 157 307 170 308 184 308 198 308 212 308 226 308 239 308 253 308 267 308 281 308 295 308 308 308 322 309 336 310 350 310 359 311 373 312 387 313 400 315 413 316 423 319 437 321 446 324 457 329 469 333 478 338 485 343 492 352 501 359 506 366 511 376 515 388 520 398 523 407 525 421 528 431 529 444 531 458 532 472 533 486 534ZM694 253 707 255 721 256 735 256 749 257 763 257 777 258 786 253 786 239 781 231 768 230 758 230 744 229 731 228 717 227 707 226 694 223 684 221 671 216 661 212 654 207 647 202 639 193 634 184 629 175 626 166 623 157 621 143 619 134 618 120 616 106 615 92 615 83 614 69 610 60 597 60 587 65 588 78 588 92 589 106 589 120 590 134 591 147 592 157 594 170 597 181 600 193 603 203 608 212 614 221 620 227 629 235 637 239 647 244 657 247 666 249 680 251 692 253Z" fill="rgb(243,76,76)"/>
<path d="M620 543 634 543 647 543 661 543 675 543 689 543 703 543 717 543 731 543 744 543 758 543 772 543 786 543 781 537 768 537 754 537 740 537 726 537 712 537 698 537 684 537 671 537 657 536 643 536 629 536 615 536 601 536 587 536 574 536 560 536 546 536 532 536 518 535 504 535 490 534 481 533 467 533 453 532 440 531 430 529 416 527 405 525 393 522 384 519 375 515 366 511 356 505 348 497 343 492 336 483 331 474 327 465 324 456 320 442 318 433 316 419 314 410 313 396 312 382 311 368 310 358 309 345 309 331 308 318 308 304 308 290 308 276 308 262 308 249 308 235 308 221 308 207 308 193 308 180 307 166 307 152 307 138 307 124 307 111 307 97 307 83 307 69 306 60 301 69 301 83 301 97 301 111 301 124 301 138 301 152 301 166 301 180 301 193 301 207 301 221 306 230 306 244 306 258 306 272 306 285 306 299 306 313 306 327 306 341 306 354 306 368 306 382 310 391 310 405 310 419 315 433 315 442 319 451 324 465 324 474 329 483 338 492 343 497 352 506 356 511 366 515 380 520 389 525 398 529 412 529 421 534 435 534 449 534 458 538 472 538 486 538 500 538 513 538 527 538 541 538 555 538 569 538 583 538 597 538 610 538 620 543ZM763 230 777 231 786 230 786 216 786 203 781 193 768 193 754 193 744 193 731 189 721 189 707 184 698 180 689 175 684 170 675 161 671 157 666 147 661 138 657 124 657 115 652 101 652 92 652 78 652 65 643 60 629 60 615 60 614 69 615 83 615 92 616 106 618 120 619 134 621 143 623 157 626 166 629 175 634 184 639 193 647 202 654 207 661 212 671 216 684 221 694 223 707 226 717 227 731 228 744 229 758 230Z" fill="rgb(199,76,76)"/>
<path d="M306 543 319 543 333 543 347 543 361 543 375 543 389 543 403 543 416 543 430 543 444 543 458 543 472 543 486 543 500 543 513 543 527 543 541 543 555 543 569 543 583 543 597 543 610 543 624 543 638 543 652 543 666 543 680 543 694 543 707 543 721 543 735 543 749 543 763 543 777 543 786 543 772 543 758 543 744 543 731 543 717 543 703 543 689 543 675 543 661 543 647 543 634 543 620 543 610 538 597 538 583 538 569 538 555 538 541 538 527 538 513 538 500 538 486 538 472 538 458 538 449 534 435 534 421 534 412 529 398 529 389 525 380 520 366 515 356 511 352 506 343 497 338 492 329 483 324 474 324 465 319 451 315 442 315 433 310 419 310 405 310 391 306 382 306 368 306 354 306 341 306 327 306 313 306 299 306 285 306 272 306 258 306 244 306 230 301 221 301 207 301 193 301 180 301 166 301 152 301 138 301 124 301 111 301 97 301 83 301 69 301 60 301 74 301 88 301 101 301 115 301 129 301 143 301 157 301 170 301 184 301 198 301 212 301 226 301 239 301 253 301 267 301 281 301 295 301 308 301 322 301 336 301 350 301 364 301 377 301 391 301 405 301 419 301 433 301 446 301 460 301 474 301 488 301 502 301 515 301 529 301 543ZM744 193 758 193 772 193 786 193 786 184 786 170 786 157 786 143 786 129 786 115 786 101 786 88 786 74 786 60 772 60 758 60 744 60 731 60 717 60 703 60 689 60 675 60 661 60 652 60 652 74 652 88 652 101 657 111 657 124 661 134 666 143 671 152 675 161 680 166 689 175 698 180 707 184 717 184 726 189 740 189Z" fill="rgb(176,76,76)"/>
</g></svg>

<canvas id="cv" width="488" height="486" class="abs" style="left:299px;top:58px;"></canvas>
<svg class="abs" style="left:0;top:0;" width="800" height="585" viewBox="0 0 800 585">
<defs><clipPath id="pc"><rect x="300" y="59" width="486" height="484"/></clipPath></defs>
<g clip-path="url(#pc)" fill="none" stroke-linejoin="round" stroke-linecap="round">
<g shape-rendering="crispEdges" stroke-opacity="0.85">
<path d="M786.0 485.2 781.4 485.2 776.8 485.1 772.1 485.1 767.5 485.1 762.9 485.1 758.3 485.1 753.7 485.1 749.0 485.0 744.4 485.0 739.8 485.0 735.2 485.0 730.6 485.0 725.9 484.9 721.3 484.9 716.7 484.9 712.1 484.8 707.5 484.8 702.9 484.8 698.2 484.8 693.6 484.7 689.0 484.7 684.4 484.6 679.8 484.6 675.1 484.5 670.5 484.5 665.9 484.4 661.3 484.4 656.7 484.3 652.0 484.3 647.4 484.2 642.8 484.1 638.2 484.0 633.6 484.0 628.9 483.9 624.3 483.8 619.7 483.7 615.1 483.6 610.5 483.5 605.9 483.4 601.2 483.2 600.3 483.2 596.6 483.1 592.0 482.9 587.4 482.7 582.8 482.4 578.1 482.2 573.5 482.0 568.9 481.7 564.3 481.4 559.7 481.1 555.0 480.8 550.4 480.5 545.8 480.1 541.2 479.8 536.6 479.4 531.9 479.0 527.8 478.6 527.3 478.5 522.7 477.9 518.1 477.2 513.5 476.6 508.9 475.8 504.2 475.1 499.6 474.3 497.7 474.0 495.0 473.3 490.4 472.2 485.8 471.0 481.1 469.8 479.7 469.4 476.5 468.2 471.9 466.4 467.4 464.8 467.3 464.7 462.7 462.2 458.8 460.2 458.0 459.6 453.4 456.1 452.8 455.6 449.1 451.0 448.9 446.4 453.4 444.0 458.0 442.9 462.7 442.4 467.3 442.1 471.9 442.0 476.5 441.9 480.3 441.8 481.1 441.8 485.8 441.8 490.4 441.7 495.0 441.7 499.6 441.7 504.2 441.6 508.9 441.6 513.5 441.6 518.1 441.5 522.7 441.5 527.3 441.5 531.9 441.4 536.6 441.4 541.2 441.3 545.8 441.3 550.4 441.2 555.0 441.2 559.7 441.1 564.3 441.1 568.9 441.0 573.5 441.0 578.1 440.9 582.8 440.9 587.4 440.8 592.0 440.8 596.6 440.7 601.2 440.7 605.9 440.6 610.5 440.6 615.1 440.5 619.7 440.5 624.3 440.4 628.9 440.4 633.6 440.4 638.2 440.3 642.8 440.3 647.4 440.2 652.0 440.2 656.7 440.2 661.3 440.1 665.9 440.1 670.5 440.1 675.1 440.1 679.8 440.0 684.4 440.0 689.0 440.0 693.6 439.9 698.2 439.9 702.9 439.9 707.5 439.9 712.1 439.9 716.7 439.8 721.3 439.8 725.9 439.8 730.6 439.8 735.2 439.8 739.8 439.7 744.4 439.7 749.0 439.7 753.7 439.7 758.3 439.7 762.9 439.7 767.5 439.6 772.1 439.6 776.8 439.6 781.4 439.6 786.0 439.6M404.8 60.0 404.8 64.6 404.8 69.2 404.8 73.8 404.8 78.4 404.8 83.0 404.8 87.6 404.7 92.2 404.7 96.8 404.7 101.4 404.7 106.0 404.7 110.6 404.7 115.2 404.6 119.8 404.6 124.4 404.6 129.0 404.6 133.6 404.5 138.2 404.5 142.8 404.5 147.4 404.5 152.0 404.5 156.6 404.4 161.2 404.4 165.8 404.4 170.4 404.3 175.0 404.3 179.6 404.3 184.2 404.2 188.8 404.2 193.4 404.2 198.0 404.1 202.6 404.1 207.2 404.1 211.8 404.0 216.4 404.0 221.0 403.9 225.6 403.9 230.2 403.9 234.8 403.8 239.4 403.8 244.0 403.7 248.6 403.7 253.2 403.6 257.8 403.6 262.4 403.5 267.0 403.5 271.6 403.4 276.2 403.4 280.8 403.3 285.4 403.3 290.0 403.2 294.6 403.2 299.2 403.1 303.8 403.1 308.4 403.0 313.0 403.0 317.6 402.9 322.2 402.9 326.8 402.8 331.4 402.8 336.0 402.8 340.6 402.7 345.2 402.7 349.8 402.7 354.4 402.7 359.0 402.6 363.6 402.6 364.4 402.6 368.2 402.5 372.8 402.3 377.4 402.0 382.0 401.5 386.6 400.4 391.2 398.0 395.7 393.4 395.5 388.8 391.9 388.3 391.2 384.8 386.6 384.1 385.9 382.2 382.0 379.6 377.4 379.5 377.3 377.9 372.8 376.1 368.2 374.9 365.1 374.5 363.6 373.3 359.0 372.1 354.4 371.0 349.8 370.3 347.1 370.0 345.2 369.2 340.6 368.4 336.0 367.7 331.4 367.0 326.8 366.4 322.2 365.7 317.6 365.7 317.1 365.3 313.0 364.9 308.4 364.5 303.8 364.1 299.2 363.8 294.6 363.4 290.0 363.1 285.4 362.8 280.8 362.5 276.2 362.3 271.6 362.0 267.0 361.8 262.4 361.6 257.8 361.4 253.2 361.2 248.6 361.0 244.9 361.0 244.0 360.9 239.4 360.8 234.8 360.7 230.2 360.6 225.6 360.5 221.0 360.4 216.4 360.3 211.8 360.2 207.2 360.1 202.6 360.1 198.0 360.0 193.4 359.9 188.8 359.9 184.2 359.8 179.6 359.7 175.0 359.7 170.4 359.7 165.8 359.6 161.2 359.6 156.6 359.5 152.0 359.5 147.4 359.5 142.8 359.4 138.2 359.4 133.6 359.4 129.0 359.3 124.4 359.3 119.8 359.3 115.2 359.3 110.6 359.2 106.0 359.2 101.4 359.2 96.8 359.2 92.2 359.2 87.6 359.1 83.0 359.1 78.4 359.1 73.8 359.1 69.2 359.1 64.6 359.1 60.0" stroke="rgb(0,0,191)" stroke-width="1.0"/>
<path d="M786.0 500.7 781.4 500.7 776.8 500.7 772.1 500.7 767.5 500.7 762.9 500.7 758.3 500.7 753.7 500.6 749.0 500.6 744.4 500.6 739.8 500.6 735.2 500.6 730.6 500.6 725.9 500.6 721.3 500.6 716.7 500.5 712.1 500.5 707.5 500.5 702.9 500.5 698.2 500.5 693.6 500.4 689.0 500.4 684.4 500.4 679.8 500.4 675.1 500.3 670.5 500.3 665.9 500.3 661.3 500.2 656.7 500.2 652.0 500.2 647.4 500.1 642.8 500.1 638.2 500.0 633.6 500.0 628.9 499.9 624.3 499.9 619.7 499.8 615.1 499.8 610.5 499.7 605.9 499.6 601.2 499.5 596.6 499.5 592.0 499.4 587.4 499.3 582.8 499.2 578.1 499.0 573.5 498.9 568.9 498.8 564.3 498.7 559.7 498.5 555.0 498.4 550.4 498.2 545.8 498.0 541.2 497.8 536.6 497.6 531.9 497.4 527.3 497.2 524.4 497.0 522.7 496.9 518.1 496.6 513.5 496.2 508.9 495.8 504.2 495.5 499.6 495.0 495.0 494.6 490.4 494.1 485.8 493.6 481.1 493.1 476.5 492.5 475.8 492.4 471.9 491.8 467.3 491.0 462.7 490.2 458.0 489.3 453.4 488.4 450.5 487.8 448.8 487.4 444.2 486.2 439.6 484.9 435.0 483.6 433.7 483.2 430.3 482.0 425.7 480.3 421.2 478.6 421.1 478.5 416.5 476.4 411.9 474.2 411.5 474.0 407.2 471.5 403.7 469.4 402.6 468.7 398.0 465.5 397.1 464.8 393.4 461.8 391.5 460.2 388.8 457.6 386.7 455.6 384.1 452.8 382.6 451.0 379.5 447.3 378.8 446.4 375.6 441.8 374.9 440.8 372.8 437.2 370.3 432.9 370.1 432.6 367.9 428.0 365.7 423.4 365.7 423.3 363.9 418.8 362.2 414.2 361.0 410.9 360.7 409.6 359.3 405.0 358.1 400.4 356.9 395.8 356.4 394.1 355.8 391.2 354.9 386.6 354.0 382.0 353.2 377.4 352.4 372.8 351.8 368.9 351.7 368.2 351.1 363.6 350.6 359.0 350.1 354.4 349.6 349.8 349.2 345.2 348.7 340.6 348.3 336.0 348.0 331.4 347.6 326.8 347.3 322.2 347.2 320.5 347.0 317.6 346.8 313.0 346.6 308.4 346.4 303.8 346.2 299.2 346.0 294.6 345.8 290.0 345.7 285.4 345.5 280.8 345.4 276.2 345.3 271.6 345.1 267.0 345.0 262.4 344.9 257.8 344.8 253.2 344.7 248.6 344.6 244.0 344.6 239.4 344.5 234.8 344.4 230.2 344.4 225.6 344.3 221.0 344.2 216.4 344.2 211.8 344.1 207.2 344.1 202.6 344.0 198.0 344.0 193.4 344.0 188.8 343.9 184.2 343.9 179.6 343.9 175.0 343.8 170.4 343.8 165.8 343.8 161.2 343.8 156.6 343.7 152.0 343.7 147.4 343.7 142.8 343.7 138.2 343.7 133.6 343.6 129.0 343.6 124.4 343.6 119.8 343.6 115.2 343.6 110.6 343.6 106.0 343.6 101.4 343.5 96.8 343.5 92.2 343.5 87.6 343.5 83.0 343.5 78.4 343.5 73.8 343.5 69.2 343.5 64.6 343.5 60.0M432.6 60.0 432.6 64.6 432.6 69.2 432.6 73.8 432.6 78.4 432.6 83.0 432.6 87.6 432.6 92.2 432.6 96.8 432.6 101.4 432.6 106.0 432.6 110.6 432.6 115.2 432.6 119.8 432.6 124.4 432.6 129.0 432.6 133.6 432.6 138.2 432.6 142.8 432.6 147.4 432.6 152.0 432.6 156.6 432.6 161.2 432.6 165.8 432.6 170.4 432.6 175.0 432.6 179.6 432.6 184.2 432.6 188.8 432.6 193.4 432.7 198.0 432.7 202.6 432.7 207.2 432.7 211.8 432.8 216.4 432.8 221.0 432.8 225.6 432.9 230.2 432.9 234.8 433.0 239.4 433.1 244.0 433.1 248.6 433.2 253.2 433.3 257.8 433.4 262.4 433.5 267.0 433.7 271.6 433.8 276.2 434.0 280.8 434.2 285.4 434.5 290.0 434.7 294.6 435.0 298.4 435.0 299.2 435.3 303.8 435.7 308.4 436.1 313.0 436.6 317.6 437.1 322.2 437.7 326.8 438.4 331.4 439.1 336.0 439.6 338.3 440.0 340.6 441.0 345.2 442.2 349.8 443.5 354.4 444.2 356.3 445.1 359.0 446.9 363.6 448.8 367.6 449.1 368.2 451.6 372.8 453.4 375.6 454.7 377.4 458.0 381.5 458.5 382.0 462.7 386.2 463.1 386.6 467.3 389.9 469.1 391.2 471.9 393.0 476.5 395.5 477.1 395.8 481.1 397.7 485.8 399.5 488.4 400.4 490.4 401.0 495.0 402.4 499.6 403.5 504.2 404.6 506.6 405.0 508.9 405.4 513.5 406.2 518.1 406.9 522.7 407.5 527.3 408.0 531.9 408.5 536.6 408.9 541.2 409.2 545.8 409.6 546.6 409.6 550.4 409.8 555.0 410.1 559.7 410.3 564.3 410.5 568.9 410.7 573.5 410.9 578.1 411.0 582.8 411.1 587.4 411.2 592.0 411.3 596.6 411.4 601.2 411.5 605.9 411.6 610.5 411.6 615.1 411.7 619.7 411.7 624.3 411.8 628.9 411.8 633.6 411.8 638.2 411.8 642.8 411.9 647.4 411.9 652.0 411.9 656.7 411.9 661.3 411.9 665.9 411.9 670.5 412.0 675.1 412.0 679.8 412.0 684.4 412.0 689.0 412.0 693.6 412.0 698.2 412.0 702.9 412.0 707.5 412.0 712.1 412.0 716.7 412.0 721.3 412.0 725.9 412.0 730.6 412.0 735.2 412.0 739.8 412.0 744.4 411.9 749.0 411.9 753.7 411.9 758.3 411.9 762.9 411.9 767.5 411.9 772.1 411.9 776.8 411.9 781.4 411.9 786.0 411.9" stroke="rgb(0,48,255)" stroke-width="1.0"/>
<path d="M786.0 509.9 781.4 509.9 776.8 509.9 772.1 509.9 767.5 509.9 762.9 509.9 758.3 509.9 753.7 509.9 749.0 509.9 744.4 509.9 739.8 509.9 735.2 509.9 730.6 509.8 725.9 509.8 721.3 509.8 716.7 509.8 712.1 509.8 707.5 509.8 702.9 509.8 698.2 509.8 693.6 509.7 689.0 509.7 684.4 509.7 679.8 509.7 675.1 509.7 670.5 509.6 665.9 509.6 661.3 509.6 656.7 509.6 652.0 509.5 647.4 509.5 642.8 509.5 638.2 509.4 633.6 509.4 628.9 509.4 624.3 509.3 619.7 509.3 615.1 509.2 610.5 509.2 605.9 509.1 601.2 509.0 596.6 509.0 592.0 508.9 587.4 508.8 582.8 508.7 578.1 508.7 573.5 508.6 568.9 508.5 564.3 508.4 559.7 508.2 555.0 508.1 550.4 508.0 545.8 507.8 541.2 507.7 536.6 507.5 531.9 507.3 527.3 507.2 522.7 507.0 518.1 506.7 513.5 506.5 508.9 506.3 507.9 506.2 504.2 506.0 499.6 505.6 495.0 505.3 490.4 504.9 485.8 504.5 481.1 504.0 476.5 503.5 471.9 503.0 467.3 502.5 462.7 501.9 460.2 501.6 458.0 501.3 453.4 500.5 448.8 499.7 444.2 498.8 439.6 497.9 435.2 497.0 435.0 496.9 430.3 495.7 425.7 494.5 421.1 493.1 418.8 492.4 416.5 491.6 411.9 489.9 407.2 488.1 406.6 487.8 402.6 485.9 398.0 483.6 397.2 483.2 393.4 480.9 389.6 478.6 388.8 478.0 384.1 474.6 383.3 474.0 379.5 470.7 378.1 469.4 374.9 466.2 373.6 464.8 370.3 461.0 369.7 460.2 366.3 455.6 365.7 454.8 363.3 451.0 361.0 447.2 360.6 446.4 358.3 441.8 356.4 437.8 356.2 437.2 354.3 432.6 352.6 428.0 351.8 425.7 351.1 423.4 349.7 418.8 348.5 414.2 347.3 409.6 347.2 409.3 346.3 405.0 345.4 400.4 344.5 395.8 343.7 391.2 342.9 386.6 342.6 384.4 342.2 382.0 341.7 377.4 341.1 372.8 340.6 368.2 340.1 363.6 339.7 359.0 339.3 354.4 338.9 349.8 338.5 345.2 338.2 340.6 338.0 337.0 337.9 336.0 337.6 331.4 337.4 326.8 337.2 322.2 337.0 317.6 336.8 313.0 336.6 308.4 336.5 303.8 336.3 299.2 336.2 294.6 336.0 290.0 335.9 285.4 335.8 280.8 335.7 276.2 335.6 271.6 335.5 267.0 335.4 262.4 335.3 257.8 335.2 253.2 335.2 248.6 335.1 244.0 335.0 239.4 335.0 234.8 334.9 230.2 334.9 225.6 334.8 221.0 334.8 216.4 334.7 211.8 334.7 207.2 334.7 202.6 334.6 198.0 334.6 193.4 334.6 188.8 334.5 184.2 334.5 179.6 334.5 175.0 334.5 170.4 334.5 165.8 334.4 161.2 334.4 156.6 334.4 152.0 334.4 147.4 334.4 142.8 334.3 138.2 334.3 133.6 334.3 129.0 334.3 124.4 334.3 119.8 334.3 115.2 334.3 110.6 334.3 106.0 334.3 101.4 334.3 96.8 334.2 92.2 334.2 87.6 334.2 83.0 334.2 78.4 334.2 73.8 334.2 69.2 334.2 64.6 334.2 60.0M455.6 60.0 455.6 64.6 455.6 69.2 455.6 73.8 455.6 78.4 455.6 83.0 455.6 87.6 455.6 92.2 455.6 96.8 455.6 101.4 455.6 106.0 455.6 110.6 455.6 115.2 455.6 119.8 455.6 124.4 455.6 129.0 455.6 133.6 455.7 138.2 455.7 142.8 455.7 147.4 455.7 152.0 455.7 156.6 455.7 161.2 455.8 165.8 455.8 170.4 455.8 175.0 455.9 179.6 455.9 184.2 455.9 188.8 456.0 193.4 456.1 198.0 456.1 202.6 456.2 207.2 456.3 211.8 456.3 216.4 456.4 221.0 456.5 225.6 456.7 230.2 456.8 234.8 456.9 239.4 457.1 244.0 457.3 248.6 457.5 253.2 457.7 257.8 458.0 262.4 458.0 263.9 458.2 267.0 458.5 271.6 458.9 276.2 459.3 280.8 459.7 285.4 460.2 290.0 460.8 294.6 461.4 299.2 462.1 303.8 462.7 307.4 462.8 308.4 463.7 313.0 464.8 317.6 465.9 322.2 467.2 326.8 467.3 327.0 468.7 331.4 470.5 336.0 471.9 339.3 472.5 340.6 474.9 345.2 476.5 347.9 477.7 349.8 481.1 354.4 481.1 354.5 485.2 359.0 485.8 359.5 490.3 363.6 490.4 363.6 495.0 367.0 496.9 368.2 499.6 369.8 504.2 372.2 505.6 372.8 508.9 374.2 513.5 376.0 517.9 377.4 518.1 377.5 522.7 378.8 527.3 379.9 531.9 380.9 536.6 381.8 537.6 382.0 541.2 382.6 545.8 383.3 550.4 383.9 555.0 384.4 559.7 384.9 564.3 385.4 568.9 385.8 573.5 386.1 578.1 386.4 581.2 386.6 582.8 386.7 587.4 386.9 592.0 387.2 596.6 387.4 601.2 387.5 605.9 387.7 610.5 387.8 615.1 388.0 619.7 388.1 624.3 388.2 628.9 388.3 633.6 388.4 638.2 388.5 642.8 388.5 647.4 388.6 652.0 388.6 656.7 388.7 661.3 388.7 665.9 388.8 670.5 388.8 675.1 388.8 679.8 388.9 684.4 388.9 689.0 388.9 693.6 388.9 698.2 389.0 702.9 389.0 707.5 389.0 712.1 389.0 716.7 389.0 721.3 389.0 725.9 389.0 730.6 389.0 735.2 389.0 739.8 389.0 744.4 389.0 749.0 389.0 753.7 389.0 758.3 389.0 762.9 389.0 767.5 389.0 772.1 389.0 776.8 389.0 781.4 389.0 786.0 389.0" stroke="rgb(0,175,255)" stroke-width="1.0"/>
<path d="M786.0 516.8 781.4 516.8 776.8 516.8 772.1 516.8 767.5 516.8 762.9 516.8 758.3 516.8 753.7 516.8 749.0 516.8 744.4 516.8 739.8 516.8 735.2 516.8 730.6 516.8 725.9 516.8 721.3 516.8 716.7 516.7 712.1 516.7 707.5 516.7 702.9 516.7 698.2 516.7 693.6 516.7 689.0 516.7 684.4 516.7 679.8 516.7 675.1 516.6 670.5 516.6 665.9 516.6 661.3 516.6 656.7 516.6 652.0 516.5 647.4 516.5 642.8 516.5 638.2 516.5 633.6 516.4 628.9 516.4 624.3 516.4 619.7 516.3 615.1 516.3 610.5 516.2 605.9 516.2 601.2 516.1 596.6 516.1 592.0 516.0 587.4 516.0 582.8 515.9 578.1 515.8 573.5 515.8 568.9 515.7 564.3 515.6 559.7 515.5 555.0 515.4 554.3 515.4 550.4 515.3 545.8 515.2 541.2 515.0 536.6 514.9 531.9 514.7 527.3 514.5 522.7 514.3 518.1 514.1 513.5 513.9 508.9 513.7 504.2 513.4 499.6 513.2 495.0 512.9 490.4 512.6 485.8 512.2 481.1 511.9 476.5 511.5 471.9 511.1 468.7 510.8 467.3 510.6 462.7 510.1 458.0 509.5 453.4 508.9 448.8 508.2 444.2 507.5 439.6 506.8 436.2 506.2 435.0 505.9 430.3 505.0 425.7 503.9 421.1 502.8 416.5 501.6 416.5 501.6 411.9 500.1 407.2 498.6 402.7 497.0 402.6 497.0 398.0 495.0 393.4 492.9 392.3 492.4 388.8 490.5 384.1 487.9 384.0 487.8 379.5 484.8 377.3 483.2 374.9 481.3 371.7 478.6 370.3 477.3 367.0 474.0 365.7 472.6 363.0 469.4 361.0 467.0 359.5 464.8 356.4 460.4 356.3 460.2 353.7 455.6 351.8 452.1 351.3 451.0 349.2 446.4 347.2 441.8 347.2 441.7 345.6 437.2 344.0 432.6 342.6 428.0 342.6 428.0 341.4 423.4 340.3 418.8 339.2 414.2 338.2 409.6 338.0 408.3 337.4 405.0 336.6 400.4 335.9 395.8 335.2 391.2 334.6 386.6 334.0 382.0 333.5 377.4 333.3 376.0 333.0 372.8 332.6 368.2 332.2 363.6 331.9 359.0 331.5 354.4 331.2 349.8 330.9 345.2 330.7 340.6 330.4 336.0 330.2 331.4 330.0 326.8 329.8 322.2 329.6 317.6 329.4 313.0 329.2 308.4 329.1 303.8 329.0 299.2 328.8 294.6 328.7 290.7 328.7 290.0 328.6 285.4 328.5 280.8 328.4 276.2 328.3 271.6 328.3 267.0 328.2 262.4 328.1 257.8 328.1 253.2 328.0 248.6 328.0 244.0 327.9 239.4 327.9 234.8 327.8 230.2 327.8 225.6 327.8 221.0 327.7 216.4 327.7 211.8 327.7 207.2 327.6 202.6 327.6 198.0 327.6 193.4 327.6 188.8 327.5 184.2 327.5 179.6 327.5 175.0 327.5 170.4 327.5 165.8 327.4 161.2 327.4 156.6 327.4 152.0 327.4 147.4 327.4 142.8 327.4 138.2 327.4 133.6 327.4 129.0 327.3 124.4 327.3 119.8 327.3 115.2 327.3 110.6 327.3 106.0 327.3 101.4 327.3 96.8 327.3 92.2 327.3 87.6 327.3 83.0 327.3 78.4 327.3 73.8 327.3 69.2 327.3 64.6 327.3 60.0M478.1 60.0 478.1 64.6 478.1 69.2 478.1 73.8 478.1 78.4 478.1 83.0 478.1 87.6 478.1 92.2 478.1 96.8 478.1 101.4 478.1 106.0 478.2 110.6 478.2 115.2 478.2 119.8 478.2 124.4 478.2 129.0 478.3 133.6 478.3 138.2 478.3 142.8 478.4 147.4 478.4 152.0 478.4 156.6 478.5 161.2 478.5 165.8 478.6 170.4 478.7 175.0 478.7 179.6 478.8 184.2 478.9 188.8 479.0 193.4 479.1 198.0 479.2 202.6 479.3 207.2 479.5 211.8 479.7 216.4 479.8 221.0 480.0 225.6 480.2 230.2 480.5 234.8 480.8 239.4 481.1 244.0 481.1 245.1 481.4 248.6 481.8 253.2 482.2 257.8 482.7 262.4 483.2 267.0 483.8 271.6 484.4 276.2 485.1 280.8 485.8 284.4 485.9 285.4 486.9 290.0 487.9 294.6 489.1 299.2 490.4 303.5 490.5 303.8 492.1 308.4 493.9 313.0 495.0 315.6 496.0 317.6 498.4 322.2 499.6 324.2 501.3 326.8 504.2 330.8 504.7 331.4 508.9 336.0 508.9 336.0 513.5 340.1 514.1 340.6 518.1 343.5 520.7 345.2 522.7 346.4 527.3 348.8 529.4 349.8 531.9 350.9 536.6 352.7 541.2 354.3 541.5 354.4 545.8 355.6 550.4 356.8 555.0 357.9 559.7 358.8 560.7 359.0 564.3 359.6 568.9 360.4 573.5 361.0 578.1 361.6 582.8 362.1 587.4 362.6 592.0 363.0 596.6 363.3 600.1 363.6 601.2 363.7 605.9 364.0 610.5 364.2 615.1 364.5 619.7 364.7 624.3 364.9 628.9 365.1 633.6 365.2 638.2 365.4 642.8 365.5 647.4 365.6 652.0 365.7 656.7 365.8 661.3 365.9 665.9 366.0 670.5 366.1 675.1 366.1 679.8 366.2 684.4 366.2 689.0 366.3 693.6 366.3 698.2 366.4 702.9 366.4 707.5 366.4 712.1 366.5 716.7 366.5 721.3 366.5 725.9 366.5 730.6 366.6 735.2 366.6 739.8 366.6 744.4 366.6 749.0 366.6 753.7 366.6 758.3 366.6 762.9 366.6 767.5 366.6 772.1 366.6 776.8 366.6 781.4 366.7 786.0 366.7" stroke="rgb(32,255,223)" stroke-width="1.0"/>
<path d="M786.0 522.5 781.4 522.5 776.8 522.5 772.1 522.5 767.5 522.5 762.9 522.5 758.3 522.5 753.7 522.5 749.0 522.4 744.4 522.4 739.8 522.4 735.2 522.4 730.6 522.4 725.9 522.4 721.3 522.4 716.7 522.4 712.1 522.4 707.5 522.4 702.9 522.4 698.2 522.4 693.6 522.3 689.0 522.3 684.4 522.3 679.8 522.3 675.1 522.3 670.5 522.3 665.9 522.3 661.3 522.2 656.7 522.2 652.0 522.2 647.4 522.2 642.8 522.2 638.2 522.1 633.6 522.1 628.9 522.1 624.3 522.0 619.7 522.0 615.1 522.0 610.5 521.9 605.9 521.9 601.2 521.9 596.6 521.8 592.0 521.8 587.4 521.7 582.8 521.6 578.1 521.6 573.5 521.5 568.9 521.4 564.3 521.4 559.7 521.3 555.0 521.2 550.4 521.1 545.8 521.0 541.2 520.9 536.6 520.8 531.9 520.6 527.3 520.5 522.7 520.3 518.1 520.2 513.5 520.0 513.5 520.0 508.9 519.8 504.2 519.6 499.6 519.3 495.0 519.0 490.4 518.8 485.8 518.5 481.1 518.1 476.5 517.8 471.9 517.4 467.3 517.0 462.7 516.6 458.0 516.1 453.4 515.6 451.8 515.4 448.8 515.0 444.2 514.3 439.6 513.6 435.0 512.9 430.3 512.1 425.7 511.2 423.6 510.8 421.1 510.2 416.5 509.1 411.9 507.9 407.2 506.6 405.7 506.2 402.6 505.2 398.0 503.5 393.4 501.8 392.9 501.6 388.8 499.7 384.1 497.5 383.2 497.0 379.5 494.9 375.4 492.4 374.9 492.0 370.3 488.7 369.1 487.8 365.7 484.8 363.9 483.2 361.0 480.4 359.4 478.6 356.4 475.1 355.5 474.0 352.2 469.4 351.8 468.9 349.3 464.8 347.2 461.1 346.7 460.2 344.5 455.6 342.6 451.4 342.4 451.0 340.6 446.4 339.0 441.8 338.0 438.7 337.5 437.2 336.2 432.6 335.0 428.0 333.9 423.4 333.3 420.9 332.9 418.8 332.0 414.2 331.2 409.6 330.5 405.0 329.8 400.4 329.1 395.8 328.7 392.8 328.5 391.2 328.0 386.6 327.6 382.0 327.1 377.4 326.7 372.8 326.3 368.2 326.0 363.6 325.6 359.0 325.3 354.4 325.1 349.8 324.8 345.2 324.5 340.6 324.3 336.0 324.1 331.4 324.1 331.4 323.9 326.8 323.8 322.2 323.6 317.6 323.5 313.0 323.3 308.4 323.2 303.8 323.1 299.2 323.0 294.6 322.9 290.0 322.8 285.4 322.7 280.8 322.7 276.2 322.6 271.6 322.5 267.0 322.4 262.4 322.4 257.8 322.3 253.2 322.3 248.6 322.2 244.0 322.2 239.4 322.2 234.8 322.1 230.2 322.1 225.6 322.0 221.0 322.0 216.4 322.0 211.8 322.0 207.2 321.9 202.6 321.9 198.0 321.9 193.4 321.9 188.8 321.8 184.2 321.8 179.6 321.8 175.0 321.8 170.4 321.8 165.8 321.8 161.2 321.7 156.6 321.7 152.0 321.7 147.4 321.7 142.8 321.7 138.2 321.7 133.6 321.7 129.0 321.7 124.4 321.7 119.8 321.7 115.2 321.7 110.6 321.6 106.0 321.6 101.4 321.6 96.8 321.6 92.2 321.6 87.6 321.6 83.0 321.6 78.4 321.6 73.8 321.6 69.2 321.6 64.6 321.6 60.0M501.7 60.0 501.7 64.6 501.7 69.2 501.7 73.8 501.7 78.4 501.7 83.0 501.8 87.6 501.8 92.2 501.8 96.8 501.8 101.4 501.9 106.0 501.9 110.6 501.9 115.2 501.9 119.8 502.0 124.4 502.0 129.0 502.1 133.6 502.1 138.2 502.2 142.8 502.3 147.4 502.3 152.0 502.4 156.6 502.5 161.2 502.6 165.8 502.7 170.4 502.8 175.0 502.9 179.6 503.1 184.2 503.2 188.8 503.4 193.4 503.6 198.0 503.8 202.6 504.0 207.2 504.2 210.7 504.3 211.8 504.6 216.4 504.9 221.0 505.3 225.6 505.7 230.2 506.1 234.8 506.6 239.4 507.1 244.0 507.8 248.6 508.4 253.2 508.9 255.8 509.2 257.8 510.1 262.4 511.1 267.0 512.2 271.6 513.4 276.2 513.5 276.5 514.8 280.8 516.5 285.4 518.1 289.4 518.3 290.0 520.5 294.6 522.7 298.6 523.1 299.2 526.1 303.8 527.3 305.4 529.7 308.4 531.9 310.8 534.1 313.0 536.6 315.2 539.5 317.6 541.2 318.8 545.8 321.8 546.4 322.2 550.4 324.4 555.0 326.6 555.6 326.8 559.7 328.4 564.3 330.0 568.6 331.4 568.9 331.5 573.5 332.7 578.1 333.8 582.8 334.8 587.4 335.7 589.4 336.0 592.0 336.4 596.6 337.1 601.2 337.7 605.9 338.2 610.5 338.7 615.1 339.2 619.7 339.6 624.3 339.9 628.9 340.2 633.6 340.5 634.7 340.6 638.2 340.8 642.8 341.0 647.4 341.2 652.0 341.4 656.7 341.6 661.3 341.8 665.9 341.9 670.5 342.0 675.1 342.1 679.8 342.2 684.4 342.3 689.0 342.4 693.6 342.5 698.2 342.6 702.9 342.6 707.5 342.7 712.1 342.7 716.7 342.8 721.3 342.8 725.9 342.9 730.6 342.9 735.2 342.9 739.8 343.0 744.4 343.0 749.0 343.0 753.7 343.0 758.3 343.1 762.9 343.1 767.5 343.1 772.1 343.1 776.8 343.1 781.4 343.1 786.0 343.1" stroke="rgb(159,255,96)" stroke-width="1.0"/>
<path d="M786.0 527.3 781.4 527.3 776.8 527.3 772.1 527.3 767.5 527.3 762.9 527.3 758.3 527.3 753.7 527.3 749.0 527.3 744.4 527.3 739.8 527.3 735.2 527.2 730.6 527.2 725.9 527.2 721.3 527.2 716.7 527.2 712.1 527.2 707.5 527.2 702.9 527.2 698.2 527.2 693.6 527.2 689.0 527.2 684.4 527.2 679.8 527.1 675.1 527.1 670.5 527.1 665.9 527.1 661.3 527.1 656.7 527.1 652.0 527.0 647.4 527.0 642.8 527.0 638.2 527.0 633.6 527.0 628.9 526.9 624.3 526.9 619.7 526.9 615.1 526.8 610.5 526.8 605.9 526.8 601.2 526.7 596.6 526.7 592.0 526.6 587.4 526.6 582.8 526.5 578.1 526.5 573.5 526.4 568.9 526.3 564.3 526.3 559.7 526.2 555.0 526.1 550.4 526.0 545.8 525.9 541.2 525.8 536.6 525.7 531.9 525.6 527.3 525.5 522.7 525.3 518.1 525.2 513.5 525.0 508.9 524.9 504.2 524.7 502.3 524.6 499.6 524.5 495.0 524.2 490.4 524.0 485.8 523.7 481.1 523.4 476.5 523.1 471.9 522.7 467.3 522.3 462.7 521.9 458.0 521.5 453.4 521.1 448.8 520.6 444.2 520.0 444.0 520.0 439.6 519.4 435.0 518.7 430.3 517.9 425.7 517.1 421.1 516.3 416.6 515.4 416.5 515.4 411.9 514.3 407.2 513.1 402.6 511.8 399.2 510.8 398.0 510.4 393.4 508.8 388.8 507.0 386.7 506.2 384.1 505.1 379.5 502.8 377.1 501.6 374.9 500.3 370.3 497.5 369.5 497.0 365.7 494.2 363.3 492.4 361.0 490.5 358.1 487.8 356.4 486.1 353.7 483.2 351.8 480.9 350.0 478.6 347.2 474.8 346.7 474.0 343.8 469.4 342.6 467.2 341.3 464.8 339.1 460.2 338.0 457.7 337.1 455.6 335.4 451.0 333.7 446.4 333.3 445.2 332.3 441.8 331.1 437.2 329.9 432.6 328.7 428.0 328.7 427.8 327.8 423.4 327.0 418.8 326.2 414.2 325.4 409.6 324.7 405.0 324.1 400.6 324.1 400.4 323.5 395.8 323.0 391.2 322.6 386.6 322.1 382.0 321.7 377.4 321.4 372.8 321.0 368.2 320.7 363.6 320.4 359.0 320.1 354.4 319.9 349.8 319.6 345.2 319.5 342.5 319.4 340.6 319.2 336.0 319.0 331.4 318.9 326.8 318.7 322.2 318.6 317.6 318.5 313.0 318.3 308.4 318.2 303.8 318.1 299.2 318.0 294.6 318.0 290.0 317.9 285.4 317.8 280.8 317.7 276.2 317.7 271.6 317.6 267.0 317.5 262.4 317.5 257.8 317.4 253.2 317.4 248.6 317.3 244.0 317.3 239.4 317.3 234.8 317.2 230.2 317.2 225.6 317.2 221.0 317.1 216.4 317.1 211.8 317.1 207.2 317.1 202.6 317.0 198.0 317.0 193.4 317.0 188.8 317.0 184.2 317.0 179.6 317.0 175.0 316.9 170.4 316.9 165.8 316.9 161.2 316.9 156.6 316.9 152.0 316.9 147.4 316.9 142.8 316.9 138.2 316.9 133.6 316.8 129.0 316.8 124.4 316.8 119.8 316.8 115.2 316.8 110.6 316.8 106.0 316.8 101.4 316.8 96.8 316.8 92.2 316.8 87.6 316.8 83.0 316.8 78.4 316.8 73.8 316.8 69.2 316.8 64.6 316.8 60.0M527.8 60.0 527.8 64.6 527.8 69.2 527.8 73.8 527.9 78.4 527.9 83.0 527.9 87.6 528.0 92.2 528.0 96.8 528.0 101.4 528.1 106.0 528.1 110.6 528.2 115.2 528.3 119.8 528.3 124.4 528.4 129.0 528.5 133.6 528.6 138.2 528.7 142.8 528.8 147.4 529.0 152.0 529.1 156.6 529.3 161.2 529.5 165.8 529.6 170.4 529.9 175.0 530.1 179.6 530.4 184.2 530.6 188.8 531.0 193.4 531.3 198.0 531.7 202.6 531.9 205.4 532.1 207.2 532.6 211.8 533.2 216.4 533.8 221.0 534.4 225.6 535.2 230.2 536.0 234.8 536.6 237.4 537.0 239.4 538.1 244.0 539.3 248.6 540.7 253.2 541.2 254.7 542.3 257.8 544.1 262.4 545.8 266.2 546.2 267.0 548.7 271.6 550.4 274.5 551.5 276.2 555.0 280.8 555.0 280.9 559.1 285.4 559.7 286.0 564.2 290.0 564.3 290.1 568.9 293.5 570.6 294.6 573.5 296.4 578.1 298.8 578.9 299.2 582.8 300.9 587.4 302.7 590.4 303.8 592.0 304.3 596.6 305.7 601.2 306.9 605.9 308.0 607.8 308.4 610.5 308.9 615.1 309.8 619.7 310.5 624.3 311.2 628.9 311.8 633.6 312.3 638.2 312.8 640.0 313.0 642.8 313.3 647.4 313.6 652.0 314.0 656.7 314.3 661.3 314.6 665.9 314.9 670.5 315.1 675.1 315.3 679.8 315.5 684.4 315.7 689.0 315.8 693.6 316.0 698.2 316.1 702.9 316.2 707.5 316.3 712.1 316.4 716.7 316.5 721.3 316.6 725.9 316.7 730.6 316.7 735.2 316.8 739.8 316.8 744.4 316.9 749.0 316.9 753.7 317.0 758.3 317.0 762.9 317.0 767.5 317.1 772.1 317.1 776.8 317.1 781.4 317.2 786.0 317.2" stroke="rgb(255,223,0)" stroke-width="1.0"/>
<path d="M786.0 531.5 781.4 531.5 776.8 531.5 772.1 531.5 767.5 531.5 762.9 531.5 758.3 531.5 753.7 531.5 749.0 531.5 744.4 531.5 739.8 531.5 735.2 531.5 730.6 531.5 725.9 531.5 721.3 531.4 716.7 531.4 712.1 531.4 707.5 531.4 702.9 531.4 698.2 531.4 693.6 531.4 689.0 531.4 684.4 531.4 679.8 531.4 675.1 531.4 670.5 531.3 665.9 531.3 661.3 531.3 656.7 531.3 652.0 531.3 647.4 531.3 642.8 531.2 638.2 531.2 633.6 531.2 628.9 531.2 624.3 531.2 619.7 531.1 615.1 531.1 610.5 531.1 605.9 531.0 601.2 531.0 596.6 531.0 592.0 530.9 587.4 530.9 582.8 530.8 578.1 530.8 573.5 530.7 568.9 530.7 564.3 530.6 559.7 530.5 555.0 530.4 550.4 530.4 545.8 530.3 541.2 530.2 536.6 530.1 531.9 530.0 527.3 529.9 522.7 529.7 518.1 529.6 513.5 529.5 508.9 529.3 506.1 529.2 504.2 529.1 499.6 528.9 495.0 528.7 490.4 528.5 485.8 528.2 481.1 527.9 476.5 527.6 471.9 527.3 467.3 527.0 462.7 526.6 458.0 526.2 453.4 525.8 448.8 525.3 444.2 524.8 442.0 524.6 439.6 524.3 435.0 523.6 430.3 523.0 425.7 522.2 421.1 521.4 416.5 520.6 413.4 520.0 411.9 519.7 407.2 518.6 402.6 517.4 398.0 516.1 395.5 515.4 393.4 514.7 388.8 513.1 384.1 511.4 382.7 510.8 379.5 509.4 374.9 507.2 373.0 506.2 370.3 504.7 365.7 501.9 365.3 501.6 361.0 498.6 359.0 497.0 356.4 494.8 353.8 492.4 351.8 490.4 349.4 487.8 347.2 485.2 345.6 483.2 342.6 479.0 342.3 478.6 339.5 474.0 338.0 471.3 337.0 469.4 334.8 464.8 333.3 461.6 332.8 460.2 331.0 455.6 329.4 451.0 328.7 448.9 328.0 446.4 326.7 441.8 325.5 437.2 324.4 432.6 324.1 431.0 323.5 428.0 322.6 423.4 321.9 418.8 321.1 414.2 320.4 409.6 319.8 405.0 319.5 402.6 319.2 400.4 318.7 395.8 318.3 391.2 317.9 386.6 317.5 382.0 317.1 377.4 316.7 372.8 316.4 368.2 316.1 363.6 315.9 359.0 315.6 354.4 315.4 349.8 315.1 345.2 314.9 340.6 314.9 338.7 314.8 336.0 314.6 331.4 314.5 326.8 314.3 322.2 314.2 317.6 314.1 313.0 314.0 308.4 313.9 303.8 313.8 299.2 313.7 294.6 313.6 290.0 313.5 285.4 313.5 280.8 313.4 276.2 313.3 271.6 313.3 267.0 313.2 262.4 313.2 257.8 313.1 253.2 313.1 248.6 313.1 244.0 313.0 239.4 313.0 234.8 313.0 230.2 312.9 225.6 312.9 221.0 312.9 216.4 312.8 211.8 312.8 207.2 312.8 202.6 312.8 198.0 312.8 193.4 312.7 188.8 312.7 184.2 312.7 179.6 312.7 175.0 312.7 170.4 312.7 165.8 312.7 161.2 312.7 156.6 312.6 152.0 312.6 147.4 312.6 142.8 312.6 138.2 312.6 133.6 312.6 129.0 312.6 124.4 312.6 119.8 312.6 115.2 312.6 110.6 312.6 106.0 312.6 101.4 312.6 96.8 312.6 92.2 312.6 87.6 312.6 83.0 312.5 78.4 312.5 73.8 312.5 69.2 312.5 64.6 312.5 60.0M558.1 60.0 558.1 64.6 558.2 69.2 558.2 73.8 558.3 78.4 558.3 83.0 558.4 87.6 558.5 92.2 558.6 96.8 558.7 101.4 558.7 106.0 558.9 110.6 559.0 115.2 559.1 119.8 559.2 124.4 559.4 129.0 559.6 133.6 559.7 136.2 559.7 138.2 560.0 142.8 560.2 147.4 560.5 152.0 560.7 156.6 561.1 161.2 561.4 165.8 561.8 170.4 562.2 175.0 562.7 179.6 563.2 184.2 563.8 188.8 564.3 192.5 564.4 193.4 565.2 198.0 566.0 202.6 566.9 207.2 567.9 211.8 568.9 215.7 569.1 216.4 570.4 221.0 571.9 225.6 573.5 229.9 573.6 230.2 575.7 234.8 578.0 239.4 578.1 239.7 580.7 244.0 582.8 247.1 583.9 248.6 587.4 252.9 587.7 253.2 592.0 257.5 592.3 257.8 596.6 261.3 598.1 262.4 601.2 264.5 605.5 267.0 605.9 267.2 610.5 269.5 615.1 271.5 615.4 271.6 619.7 273.2 624.3 274.7 628.9 276.0 629.6 276.2 633.6 277.2 638.2 278.2 642.8 279.1 647.4 279.9 652.0 280.7 653.0 280.8 656.7 281.3 661.3 281.9 665.9 282.4 670.5 282.9 675.1 283.3 679.8 283.7 684.4 284.0 689.0 284.3 693.6 284.6 698.2 284.9 702.9 285.1 707.5 285.3 709.5 285.4 712.1 285.5 716.7 285.7 721.3 285.8 725.9 286.0 730.6 286.1 735.2 286.2 739.8 286.3 744.4 286.4 749.0 286.5 753.7 286.6 758.3 286.6 762.9 286.7 767.5 286.8 772.1 286.8 776.8 286.9 781.4 286.9 786.0 287.0" stroke="rgb(255,112,0)" stroke-width="1.0"/>
<path d="M786.0 535.3 781.4 535.3 776.8 535.3 772.1 535.3 767.5 535.3 762.9 535.3 758.3 535.3 753.7 535.3 749.0 535.3 744.4 535.3 739.8 535.3 735.2 535.2 730.6 535.2 725.9 535.2 721.3 535.2 716.7 535.2 712.1 535.2 707.5 535.2 702.9 535.2 698.2 535.2 693.6 535.2 689.0 535.2 684.4 535.2 679.8 535.2 675.1 535.1 670.5 535.1 665.9 535.1 661.3 535.1 656.7 535.1 652.0 535.1 647.4 535.1 642.8 535.0 638.2 535.0 633.6 535.0 628.9 535.0 624.3 535.0 619.7 534.9 615.1 534.9 610.5 534.9 605.9 534.9 601.2 534.8 596.6 534.8 592.0 534.8 587.4 534.7 582.8 534.7 578.1 534.7 573.5 534.6 568.9 534.6 564.3 534.5 559.7 534.5 555.0 534.4 550.4 534.3 545.8 534.2 541.2 534.1 536.6 534.0 531.9 533.9 528.0 533.8 527.3 533.8 522.7 533.7 518.1 533.5 513.5 533.4 508.9 533.2 504.2 533.0 499.6 532.8 495.0 532.6 490.4 532.4 485.8 532.2 481.1 531.9 476.5 531.7 471.9 531.4 467.3 531.1 462.7 530.7 458.0 530.4 453.4 530.0 448.8 529.6 444.9 529.2 444.2 529.1 439.6 528.6 435.0 528.0 430.3 527.4 425.7 526.7 421.1 526.0 416.5 525.2 413.2 524.6 411.9 524.3 407.2 523.3 402.6 522.2 398.0 521.1 393.9 520.0 393.4 519.8 388.8 518.3 384.1 516.8 380.5 515.4 379.5 515.0 374.9 513.0 370.3 510.8 370.3 510.8 365.7 508.2 362.4 506.2 361.0 505.3 356.4 502.0 355.9 501.6 351.8 498.1 350.6 497.0 347.2 493.6 346.1 492.4 342.6 488.3 342.2 487.8 338.8 483.2 338.0 481.9 336.0 478.6 333.3 474.0 333.3 474.0 331.2 469.4 329.1 464.8 328.7 463.8 327.4 460.2 325.8 455.6 324.3 451.0 324.1 450.5 323.0 446.4 321.8 441.8 320.8 437.2 319.7 432.6 319.5 431.3 318.9 428.0 318.1 423.4 317.4 418.8 316.7 414.2 316.1 409.6 315.5 405.0 314.9 400.4 314.9 399.7 314.4 395.8 314.1 391.2 313.7 386.6 313.3 382.0 313.0 377.4 312.7 372.8 312.4 368.2 312.1 363.6 311.8 359.0 311.6 354.4 311.4 349.8 311.2 345.2 311.0 340.6 310.8 336.0 310.7 331.4 310.5 326.8 310.4 322.2 310.3 317.6 310.2 316.9 310.1 313.0 310.0 308.4 309.9 303.8 309.8 299.2 309.7 294.6 309.6 290.0 309.6 285.4 309.5 280.8 309.5 276.2 309.4 271.6 309.4 267.0 309.3 262.4 309.3 257.8 309.3 253.2 309.2 248.6 309.2 244.0 309.2 239.4 309.1 234.8 309.1 230.2 309.1 225.6 309.1 221.0 309.0 216.4 309.0 211.8 309.0 207.2 309.0 202.6 309.0 198.0 309.0 193.4 308.9 188.8 308.9 184.2 308.9 179.6 308.9 175.0 308.9 170.4 308.9 165.8 308.9 161.2 308.9 156.6 308.8 152.0 308.8 147.4 308.8 142.8 308.8 138.2 308.8 133.6 308.8 129.0 308.8 124.4 308.8 119.8 308.8 115.2 308.8 110.6 308.8 106.0 308.8 101.4 308.8 96.8 308.8 92.2 308.8 87.6 308.8 83.0 308.8 78.4 308.8 73.8 308.8 69.2 308.7 64.6 308.7 60.0M595.8 60.0 595.9 64.6 596.0 69.2 596.1 73.8 596.2 78.4 596.3 83.0 596.5 87.6 596.6 92.2 596.6 92.3 596.8 96.8 597.0 101.4 597.2 106.0 597.4 110.6 597.7 115.2 598.0 119.8 598.3 124.4 598.7 129.0 599.1 133.6 599.5 138.2 600.0 142.8 600.5 147.4 601.1 152.0 601.2 153.0 601.8 156.6 602.5 161.2 603.4 165.8 604.3 170.4 605.3 175.0 605.9 177.1 606.5 179.6 607.9 184.2 609.4 188.8 610.5 191.6 611.2 193.4 613.2 198.0 615.1 201.8 615.5 202.6 618.3 207.2 619.7 209.3 621.6 211.8 624.3 215.2 625.5 216.4 628.9 219.9 630.2 221.0 633.6 223.7 636.1 225.6 638.2 227.0 642.8 229.7 643.7 230.2 647.4 232.1 652.0 234.1 653.8 234.8 656.7 235.9 661.3 237.4 665.9 238.7 668.4 239.4 670.5 239.9 675.1 241.0 679.8 241.9 684.4 242.7 689.0 243.5 692.6 244.0 693.6 244.1 698.2 244.7 702.9 245.2 707.5 245.7 712.1 246.2 716.7 246.5 721.3 246.9 725.9 247.2 730.6 247.5 735.2 247.8 739.8 248.0 744.4 248.2 749.0 248.4 753.6 248.6 753.7 248.6 758.3 248.8 762.9 248.9 767.5 249.0 772.1 249.2 776.8 249.3 781.4 249.4 786.0 249.4" stroke="rgb(255,16,0)" stroke-width="1.0"/>
<path d="M786.0 543.0 781.4 543.0 776.8 543.0 772.1 543.0 767.5 543.0 762.9 543.0 758.3 543.0 753.7 543.0 749.0 543.0 744.4 543.0 739.8 543.0 735.2 543.0 730.6 543.0 725.9 543.0 721.3 543.0 716.7 543.0 712.1 543.0 707.5 543.0 702.9 543.0 698.2 543.0 693.6 543.0 689.0 543.0 684.4 543.0 679.8 543.0 675.1 543.0 670.5 543.0 665.9 543.0 661.3 543.0 656.7 543.0 652.0 543.0 647.4 543.0 642.8 543.0 638.2 543.0 633.6 543.0 628.9 543.0 624.3 543.0 619.7 543.0 615.1 538.4 615.1 538.4 610.5 538.4 605.9 538.4 601.2 538.4 596.6 538.4 592.0 538.4 587.4 538.4 582.8 538.4 578.1 538.4 573.5 538.4 568.9 538.4 564.3 538.4 559.7 538.4 555.0 538.4 550.4 538.4 545.8 538.4 541.2 538.4 536.6 538.4 531.9 538.4 527.3 538.4 522.7 538.4 518.1 538.4 513.5 538.4 508.9 538.4 504.2 538.4 499.6 538.4 495.0 538.4 490.4 538.4 485.8 538.4 481.1 538.4 476.5 538.4 471.9 538.4 467.3 538.4 462.7 538.4 458.0 538.4 453.4 533.8 453.4 533.8 448.8 533.8 444.2 533.8 439.6 533.8 435.0 533.8 430.3 533.8 425.7 533.8 421.1 533.8 416.5 533.8 411.9 529.2 411.9 529.2 407.2 529.2 402.6 529.2 398.0 529.2 393.4 524.6 393.4 524.6 388.8 524.6 384.1 524.6 379.5 520.0 379.5 520.0 374.9 520.0 370.3 520.0 365.7 515.4 365.7 515.4 361.0 515.4 356.4 510.8 356.4 510.8 351.8 506.2 351.8 506.2 347.2 501.6 347.2 501.6 342.6 497.0 342.6 497.0 338.0 492.4 338.0 492.4 333.3 487.8 333.3 487.8 328.7 483.2 328.7 478.6 328.7 478.6 324.1 474.0 324.1 469.4 324.1 464.8 324.1 464.8 319.5 460.2 319.5 455.6 319.5 451.0 319.5 451.0 314.9 446.4 314.9 441.8 314.9 437.2 314.9 432.6 314.9 432.6 310.2 428.0 310.2 423.4 310.2 418.8 310.2 414.2 310.2 409.6 310.2 405.0 310.2 400.4 310.2 395.8 310.2 391.2 310.2 391.2 305.6 386.6 305.6 382.0 305.6 377.4 305.6 372.8 305.6 368.2 305.6 363.6 305.6 359.0 305.6 354.4 305.6 349.8 305.6 345.2 305.6 340.6 305.6 336.0 305.6 331.4 305.6 326.8 305.6 322.2 305.6 317.6 305.6 313.0 305.6 308.4 305.6 303.8 305.6 299.2 305.6 294.6 305.6 290.0 305.6 285.4 305.6 280.8 305.6 276.2 305.6 271.6 305.6 267.0 305.6 262.4 305.6 257.8 305.6 253.2 305.6 248.6 305.6 244.0 305.6 239.4 305.6 234.8 305.6 230.2 305.6 230.2 301.0 225.6 301.0 221.0 301.0 216.4 301.0 211.8 301.0 207.2 301.0 202.6 301.0 198.0 301.0 193.4 301.0 188.8 301.0 184.2 301.0 179.6 301.0 175.0 301.0 170.4 301.0 165.8 301.0 161.2 301.0 156.6 301.0 152.0 301.0 147.4 301.0 142.8 301.0 138.2 301.0 133.6 301.0 129.0 301.0 124.4 301.0 119.8 301.0 115.2 301.0 110.6 301.0 106.0 301.0 101.4 301.0 96.8 301.0 92.2 301.0 87.6 301.0 83.0 301.0 78.4 301.0 73.8 301.0 69.2 301.0 64.6 301.0 60.0M652.0 60.0 652.0 64.6 652.0 69.2 652.0 73.8 652.0 78.4 652.0 83.0 652.0 87.6 652.0 92.2 652.0 96.8 652.0 101.4 652.0 101.4 656.7 106.0 656.7 110.6 656.7 115.2 656.7 119.8 656.7 124.4 656.7 124.4 661.3 129.0 661.3 133.6 661.3 138.2 661.3 138.2 665.9 142.8 665.9 147.4 665.9 147.4 670.5 152.0 670.5 156.6 670.5 156.6 675.1 161.2 675.1 161.2 679.8 165.8 679.8 165.8 684.4 170.4 684.4 170.4 689.0 175.0 689.0 175.0 693.6 175.0 698.2 179.6 698.2 179.6 702.9 179.6 707.5 184.2 707.5 184.2 712.1 184.2 716.7 184.2 721.3 188.8 721.3 188.8 725.9 188.8 730.6 188.8 735.2 188.8 739.8 188.8 744.4 193.4 744.4 193.4 749.0 193.4 753.7 193.4 758.3 193.4 762.9 193.4 767.5 193.4 772.1 193.4 776.8 193.4 781.4 193.4 786.0 193.4" stroke="rgb(143,0,0)" stroke-width="1.0"/>

</g>
<path d="M379.5 175.0 377.7 179.6 376.1 184.2 375.0 189.1 374.3 194.1 374.2 199.5 374.8 205.1 375.9 211.0 377.5 217.1 379.3 223.2 381.2 229.4 382.9 235.5 384.4 241.4 385.5 247.0 386.0 252.4 386.1 257.4 385.6 262.2 384.6 266.6 383.2 270.9 381.6 274.9 379.8 278.8 378.2 282.7 376.8 286.7 375.9 290.8 375.4 295.0 375.6 299.5 376.4 304.1 377.6 309.0 379.3 313.8 381.2 318.7 383.2 323.6 385.1 328.2 386.8 332.7 388.2 336.9 389.2 340.7 389.7 344.3 389.7 347.5 389.4 350.4 388.6 353.0 387.6 355.3 386.3 357.4 385.0 359.3 383.7 361.0 382.6 362.6 381.7 364.1 381.2 365.6 381.1 367.0 381.4 368.5 382.2 369.9 383.3 371.2 384.8 372.5 386.4 373.7 388.1 374.7 389.8 375.5 391.4 376.0 392.8 376.3 393.9 376.3 394.7 376.0 395.1 375.4 395.0 374.5 394.5 373.2 393.6 371.7 392.3 369.8 390.6 367.6 388.7 365.1 386.6 362.4 384.5 359.5 382.4 356.5 380.5 353.3 379.1 350.2 378.0 347.1 377.6 344.1 377.7 341.2 378.4 338.3 379.5 335.6 381.0 332.8 382.6 330.1 384.2 327.1 385.7 324.0 387.0 320.7 387.7 317.0 388.1 313.1 387.8 308.8 387.0 304.1 385.8 299.1 384.1 293.9 382.2 288.4 380.1 282.8 378.1 277.2 376.3 271.6 375.1 266.2 374.3 261.0 374.3 256.1 374.9 251.5 376.1 247.0 377.7 242.8 379.5 238.6 381.5 234.4 383.3 230.2 384.7 225.7 385.8 221.0 386.2 215.9 386.1 210.6 385.4 204.9 384.1 198.9 382.5 192.7 380.5 186.4 378.5 180.0 376.6 173.6 375.1 167.4 374.1 161.4 373.7 155.8 373.9 150.4 374.8 145.4 376.3 140.6 378.1 135.9 380.1 131.4 382.0 126.8 383.7 122.1 385.0 117.2 385.8 112.0 386.0 106.5 385.6 100.7 384.6 94.6 383.1 88.2 381.3 81.7 379.3 75.1 377.3 68.5 375.6 62.0 374.4 55.7 373.7 49.8 373.6 46.9" stroke="#000" stroke-width="5" shape-rendering="crispEdges"/>
</g>
</svg>
<div class="tick" style="left:281.0px;top:550.6px;width:40px;text-align:center;">0.4</div>
<div class="tick" style="left:255.8px;top:539.2px;width:40px;text-align:right;">0.4</div>
<div class="tick" style="left:327.2px;top:550.6px;width:40px;text-align:center;">0.6</div>
<div class="tick" style="left:255.8px;top:493.2px;width:40px;text-align:right;">0.6</div>
<div class="tick" style="left:373.4px;top:550.6px;width:40px;text-align:center;">0.8</div>
<div class="tick" style="left:255.8px;top:447.2px;width:40px;text-align:right;">0.8</div>
<div class="tick" style="left:419.6px;top:550.6px;width:40px;text-align:center;">1</div>
<div class="tick" style="left:255.8px;top:401.2px;width:40px;text-align:right;">1</div>
<div class="tick" style="left:465.8px;top:550.6px;width:40px;text-align:center;">1.2</div>
<div class="tick" style="left:255.8px;top:355.2px;width:40px;text-align:right;">1.2</div>
<div class="tick" style="left:511.9px;top:550.6px;width:40px;text-align:center;">1.4</div>
<div class="tick" style="left:255.8px;top:309.2px;width:40px;text-align:right;">1.4</div>
<div class="tick" style="left:558.1px;top:550.6px;width:40px;text-align:center;">1.6</div>
<div class="tick" style="left:255.8px;top:263.2px;width:40px;text-align:right;">1.6</div>
<div class="tick" style="left:604.3px;top:550.6px;width:40px;text-align:center;">1.8</div>
<div class="tick" style="left:255.8px;top:217.2px;width:40px;text-align:right;">1.8</div>
<div class="tick" style="left:650.5px;top:550.6px;width:40px;text-align:center;">2</div>
<div class="tick" style="left:255.8px;top:171.2px;width:40px;text-align:right;">2</div>
<div class="tick" style="left:696.7px;top:550.6px;width:40px;text-align:center;">2.2</div>
<div class="tick" style="left:255.8px;top:125.2px;width:40px;text-align:right;">2.2</div>
<div class="tick" style="left:742.9px;top:550.6px;width:40px;text-align:center;">2.4</div>
<div class="tick" style="left:255.8px;top:79.2px;width:40px;text-align:right;">2.4</div>
<div class="abs" style="left:393.2px;top:563.3px;width:300px;text-align:center;font-family:'Liberation Serif',serif;font-size:14.35px;line-height:16px;color:#3a3a3a;white-space:nowrap;">A-B bond distance (&#197;)</div>
<div class="abs" style="left:118.0px;top:292.7px;width:300px;text-align:center;font-family:'Liberation Serif',serif;font-size:14.35px;line-height:16px;color:#3a3a3a;white-space:nowrap;transform:rotate(-90deg);transform-origin:150px 8px;">B-C bond distance (&#197;)</div>

<script>
(function(){
var d=0.17915856,D=104.07744477,beta=1.9907181,re=0.74034971;
var JET=[[0,0,143],[0,0,159],[0,0,175],[0,0,191],[0,0,207],[0,0,223],[0,0,239],[0,0,255],[0,16,255],[0,32,255],[0,48,255],[0,64,255],[0,80,255],[0,96,255],[0,112,255],[0,128,255],[0,143,255],[0,159,255],[0,175,255],[0,191,255],[0,207,255],[0,223,255],[0,239,255],[0,255,255],[16,255,239],[32,255,223],[48,255,207],[64,255,191],[80,255,175],[96,255,159],[112,255,143],[128,255,128],[143,255,112],[159,255,96],[175,255,80],[191,255,64],[207,255,48],[223,255,32],[239,255,16],[255,255,0],[255,239,0],[255,223,0],[255,207,0],[255,191,0],[255,175,0],[255,159,0],[255,143,0],[255,128,0],[255,112,0],[255,96,0],[255,80,0],[255,64,0],[255,48,0],[255,32,0],[255,16,0],[255,0,0],[239,0,0],[223,0,0],[207,0,0],[191,0,0],[175,0,0],[159,0,0],[143,0,0],[128,0,0]];
function V(a,b){
 var c=a+b,ea=Math.exp(-beta*(a-re)),eb=Math.exp(-beta*(b-re)),ec=Math.exp(-beta*(c-re));
 var k=D/4/(1+d);
 var qa=k*((3+d)*ea*ea-(2+6*d)*ea),ja=k*((1+3*d)*ea*ea-(6+2*d)*ea);
 var qb=k*((3+d)*eb*eb-(2+6*d)*eb),jb=k*((1+3*d)*eb*eb-(6+2*d)*eb);
 var qc=k*((3+d)*ec*ec-(2+6*d)*ec),jc=k*((1+3*d)*ec*ec-(6+2*d)*ec);
 return qa+qb+qc-Math.sqrt(0.5*((ja-jb)*(ja-jb)+(jb-jc)*(jb-jc)+(jc-ja)*(jc-ja)));
}
var N=106,Z=new Float64Array(N*N),cmin=1e9,cmax=-20;
for(var i=0;i<N;i++)for(var j=0;j<N;j++){var v=V(0.4+0.02*j,0.4+0.02*i);if(v>cmax)v=cmax;Z[i*N+j]=v;if(v<cmin)cmin=v;}
var cv=document.getElementById('cv'),ctx=cv.getContext('2d'),W=cv.width,H=cv.height;
var OX=299,OY=58,X0=301,SX=230.95,Y0=543,SY=230,ALPHA=0.7;
var base=new Float32Array(W*H*3);
for(var p=0;p<W*H*3;p++)base[p]=255;
function shade(x,y,a,col){ if(x<0||y<0||x>=W||y>=H)return; var q=(y*W+x)*3; base[q]=base[q]*(1-a)+col*a;base[q+1]=base[q+1]*(1-a)+col*a;base[q+2]=base[q+2]*(1-a)+col*a;}
var GA=0.09,GC=38;
for(var t=1;t<=10;t++){var r=0.4+0.2*t; var gx=Math.floor(X0+(r-0.4)*SX)-OX; var gy=Math.floor(Y0-(r-0.4)*SY)-OY;
 for(var y=1;y<H-1;y++)shade(gx,y,GA,GC); for(var x=1;x<W-1;x++)shade(x,gy,GA,GC);}
var AXL=300-OX, AXB=542-OY;
for(var t=0;t<=10;t++){var r=0.4+0.2*t; var gx=Math.floor(X0+(r-0.4)*SX)-OX; var gy=Math.floor(Y0-(r-0.4)*SY)-OY;
 for(var k=0;k<5;k++){shade(gx,AXB-k,1,GC);shade(AXL+k,gy,1,GC);}}
for(var y=1;y<H-1;y++)shade(AXL,y,1,GC);
for(var x=1;x<W-1;x++)shade(x,AXB,1,GC);
var img=ctx.createImageData(W,H),dd=img.data;
for(var y=0;y<H;y++){var Y=OY+y+0.5,b=0.4+(Y0-Y)/SY;
 for(var x=0;x<W;x++){var X=OX+x+0.5,a=0.4+(X-X0)/SX,o=(y*W+x)*4,q=(y*W+x)*3;
  if(y==H-1){dd[o+3]=0;continue;} if(x==0||y==0||x==W-1){dd[o]=255;dd[o+1]=255;dd[o+2]=255;dd[o+3]=255;continue;}
  if(a<0.4)a=0.4; if(a>2.5)a=2.5; if(b<0.4)b=0.4; if(b>2.5)b=2.5;
  var fj=(a-0.4)/0.02,fi=(b-0.4)/0.02,j0=Math.min(Math.floor(fj),N-2),i0=Math.min(Math.floor(fi),N-2),tx=fj-j0,ty=fi-i0;
  var v=(Z[i0*N+j0]*(1-tx)+Z[i0*N+j0+1]*tx)*(1-ty)+(Z[(i0+1)*N+j0]*(1-tx)+Z[(i0+1)*N+j0+1]*tx)*ty;
  var idx=Math.floor((v-cmin)/(cmax-cmin)*63); if(idx>62)idx=62; if(idx<0)idx=0;
  var c=JET[idx];
  dd[o]=c[0]*ALPHA+base[q]*(1-ALPHA);dd[o+1]=c[1]*ALPHA+base[q+1]*(1-ALPHA);dd[o+2]=c[2]*ALPHA+base[q+2]*(1-ALPHA);dd[o+3]=255;}}
ctx.putImageData(img,0,0);
})();
</script>
</body></html>
